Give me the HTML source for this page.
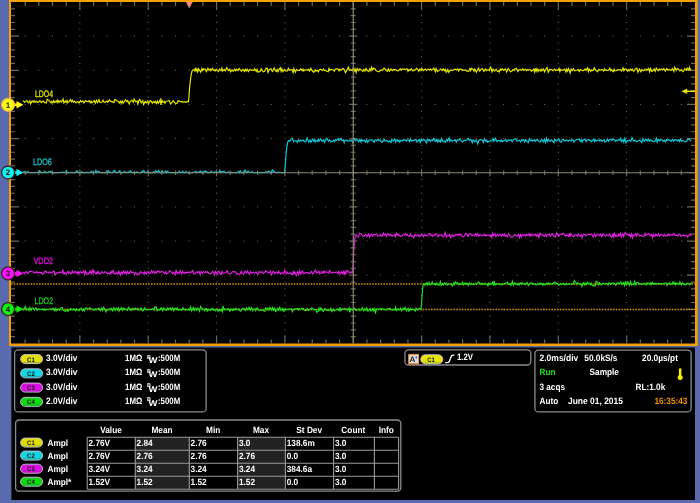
<!DOCTYPE html><html><head><meta charset="utf-8"><style>html,body{margin:0;padding:0;width:700px;height:503px;overflow:hidden;background:#5a6aae;font-family:"Liberation Sans",sans-serif}</style></head><body><svg width="700" height="503" viewBox="0 0 700 503" style="position:absolute;left:0;top:0;will-change:transform" text-rendering="geometricPrecision"><rect x="0" y="0" width="700" height="503" fill="#5a6aae"/><rect x="9" y="0" width="688.7" height="346" fill="#f5a000"/><rect x="11.0" y="2.0" width="684.0" height="341.5" fill="#000"/><rect x="11.4" y="347.5" width="683.6" height="152.5" fill="#000"/><path d="M24.67 35.65h1v1h-1zM38.34 35.65h1v1h-1zM52.01 35.65h1v1h-1zM65.68 35.65h1v1h-1zM79.35 35.65h1v1h-1zM93.02 35.65h1v1h-1zM106.69 35.65h1v1h-1zM120.36 35.65h1v1h-1zM134.03 35.65h1v1h-1zM147.70 35.65h1v1h-1zM161.37 35.65h1v1h-1zM175.04 35.65h1v1h-1zM188.71 35.65h1v1h-1zM202.38 35.65h1v1h-1zM216.05 35.65h1v1h-1zM229.72 35.65h1v1h-1zM243.39 35.65h1v1h-1zM257.06 35.65h1v1h-1zM270.73 35.65h1v1h-1zM284.40 35.65h1v1h-1zM298.07 35.65h1v1h-1zM311.74 35.65h1v1h-1zM325.41 35.65h1v1h-1zM339.08 35.65h1v1h-1zM352.75 35.65h1v1h-1zM366.42 35.65h1v1h-1zM380.09 35.65h1v1h-1zM393.76 35.65h1v1h-1zM407.43 35.65h1v1h-1zM421.10 35.65h1v1h-1zM434.77 35.65h1v1h-1zM448.44 35.65h1v1h-1zM462.11 35.65h1v1h-1zM475.78 35.65h1v1h-1zM489.45 35.65h1v1h-1zM503.12 35.65h1v1h-1zM516.79 35.65h1v1h-1zM530.46 35.65h1v1h-1zM544.13 35.65h1v1h-1zM557.80 35.65h1v1h-1zM571.47 35.65h1v1h-1zM585.14 35.65h1v1h-1zM598.81 35.65h1v1h-1zM612.48 35.65h1v1h-1zM626.15 35.65h1v1h-1zM639.82 35.65h1v1h-1zM653.49 35.65h1v1h-1zM667.16 35.65h1v1h-1zM680.83 35.65h1v1h-1zM24.67 69.80h1v1h-1zM38.34 69.80h1v1h-1zM52.01 69.80h1v1h-1zM65.68 69.80h1v1h-1zM79.35 69.80h1v1h-1zM93.02 69.80h1v1h-1zM106.69 69.80h1v1h-1zM120.36 69.80h1v1h-1zM134.03 69.80h1v1h-1zM147.70 69.80h1v1h-1zM161.37 69.80h1v1h-1zM175.04 69.80h1v1h-1zM188.71 69.80h1v1h-1zM202.38 69.80h1v1h-1zM216.05 69.80h1v1h-1zM229.72 69.80h1v1h-1zM243.39 69.80h1v1h-1zM257.06 69.80h1v1h-1zM270.73 69.80h1v1h-1zM284.40 69.80h1v1h-1zM298.07 69.80h1v1h-1zM311.74 69.80h1v1h-1zM325.41 69.80h1v1h-1zM339.08 69.80h1v1h-1zM352.75 69.80h1v1h-1zM366.42 69.80h1v1h-1zM380.09 69.80h1v1h-1zM393.76 69.80h1v1h-1zM407.43 69.80h1v1h-1zM421.10 69.80h1v1h-1zM434.77 69.80h1v1h-1zM448.44 69.80h1v1h-1zM462.11 69.80h1v1h-1zM475.78 69.80h1v1h-1zM489.45 69.80h1v1h-1zM503.12 69.80h1v1h-1zM516.79 69.80h1v1h-1zM530.46 69.80h1v1h-1zM544.13 69.80h1v1h-1zM557.80 69.80h1v1h-1zM571.47 69.80h1v1h-1zM585.14 69.80h1v1h-1zM598.81 69.80h1v1h-1zM612.48 69.80h1v1h-1zM626.15 69.80h1v1h-1zM639.82 69.80h1v1h-1zM653.49 69.80h1v1h-1zM667.16 69.80h1v1h-1zM680.83 69.80h1v1h-1zM24.67 103.95h1v1h-1zM38.34 103.95h1v1h-1zM52.01 103.95h1v1h-1zM65.68 103.95h1v1h-1zM79.35 103.95h1v1h-1zM93.02 103.95h1v1h-1zM106.69 103.95h1v1h-1zM120.36 103.95h1v1h-1zM134.03 103.95h1v1h-1zM147.70 103.95h1v1h-1zM161.37 103.95h1v1h-1zM175.04 103.95h1v1h-1zM188.71 103.95h1v1h-1zM202.38 103.95h1v1h-1zM216.05 103.95h1v1h-1zM229.72 103.95h1v1h-1zM243.39 103.95h1v1h-1zM257.06 103.95h1v1h-1zM270.73 103.95h1v1h-1zM284.40 103.95h1v1h-1zM298.07 103.95h1v1h-1zM311.74 103.95h1v1h-1zM325.41 103.95h1v1h-1zM339.08 103.95h1v1h-1zM352.75 103.95h1v1h-1zM366.42 103.95h1v1h-1zM380.09 103.95h1v1h-1zM393.76 103.95h1v1h-1zM407.43 103.95h1v1h-1zM421.10 103.95h1v1h-1zM434.77 103.95h1v1h-1zM448.44 103.95h1v1h-1zM462.11 103.95h1v1h-1zM475.78 103.95h1v1h-1zM489.45 103.95h1v1h-1zM503.12 103.95h1v1h-1zM516.79 103.95h1v1h-1zM530.46 103.95h1v1h-1zM544.13 103.95h1v1h-1zM557.80 103.95h1v1h-1zM571.47 103.95h1v1h-1zM585.14 103.95h1v1h-1zM598.81 103.95h1v1h-1zM612.48 103.95h1v1h-1zM626.15 103.95h1v1h-1zM639.82 103.95h1v1h-1zM653.49 103.95h1v1h-1zM667.16 103.95h1v1h-1zM680.83 103.95h1v1h-1zM24.67 138.10h1v1h-1zM38.34 138.10h1v1h-1zM52.01 138.10h1v1h-1zM65.68 138.10h1v1h-1zM79.35 138.10h1v1h-1zM93.02 138.10h1v1h-1zM106.69 138.10h1v1h-1zM120.36 138.10h1v1h-1zM134.03 138.10h1v1h-1zM147.70 138.10h1v1h-1zM161.37 138.10h1v1h-1zM175.04 138.10h1v1h-1zM188.71 138.10h1v1h-1zM202.38 138.10h1v1h-1zM216.05 138.10h1v1h-1zM229.72 138.10h1v1h-1zM243.39 138.10h1v1h-1zM257.06 138.10h1v1h-1zM270.73 138.10h1v1h-1zM284.40 138.10h1v1h-1zM298.07 138.10h1v1h-1zM311.74 138.10h1v1h-1zM325.41 138.10h1v1h-1zM339.08 138.10h1v1h-1zM352.75 138.10h1v1h-1zM366.42 138.10h1v1h-1zM380.09 138.10h1v1h-1zM393.76 138.10h1v1h-1zM407.43 138.10h1v1h-1zM421.10 138.10h1v1h-1zM434.77 138.10h1v1h-1zM448.44 138.10h1v1h-1zM462.11 138.10h1v1h-1zM475.78 138.10h1v1h-1zM489.45 138.10h1v1h-1zM503.12 138.10h1v1h-1zM516.79 138.10h1v1h-1zM530.46 138.10h1v1h-1zM544.13 138.10h1v1h-1zM557.80 138.10h1v1h-1zM571.47 138.10h1v1h-1zM585.14 138.10h1v1h-1zM598.81 138.10h1v1h-1zM612.48 138.10h1v1h-1zM626.15 138.10h1v1h-1zM639.82 138.10h1v1h-1zM653.49 138.10h1v1h-1zM667.16 138.10h1v1h-1zM680.83 138.10h1v1h-1zM24.67 206.40h1v1h-1zM38.34 206.40h1v1h-1zM52.01 206.40h1v1h-1zM65.68 206.40h1v1h-1zM79.35 206.40h1v1h-1zM93.02 206.40h1v1h-1zM106.69 206.40h1v1h-1zM120.36 206.40h1v1h-1zM134.03 206.40h1v1h-1zM147.70 206.40h1v1h-1zM161.37 206.40h1v1h-1zM175.04 206.40h1v1h-1zM188.71 206.40h1v1h-1zM202.38 206.40h1v1h-1zM216.05 206.40h1v1h-1zM229.72 206.40h1v1h-1zM243.39 206.40h1v1h-1zM257.06 206.40h1v1h-1zM270.73 206.40h1v1h-1zM284.40 206.40h1v1h-1zM298.07 206.40h1v1h-1zM311.74 206.40h1v1h-1zM325.41 206.40h1v1h-1zM339.08 206.40h1v1h-1zM352.75 206.40h1v1h-1zM366.42 206.40h1v1h-1zM380.09 206.40h1v1h-1zM393.76 206.40h1v1h-1zM407.43 206.40h1v1h-1zM421.10 206.40h1v1h-1zM434.77 206.40h1v1h-1zM448.44 206.40h1v1h-1zM462.11 206.40h1v1h-1zM475.78 206.40h1v1h-1zM489.45 206.40h1v1h-1zM503.12 206.40h1v1h-1zM516.79 206.40h1v1h-1zM530.46 206.40h1v1h-1zM544.13 206.40h1v1h-1zM557.80 206.40h1v1h-1zM571.47 206.40h1v1h-1zM585.14 206.40h1v1h-1zM598.81 206.40h1v1h-1zM612.48 206.40h1v1h-1zM626.15 206.40h1v1h-1zM639.82 206.40h1v1h-1zM653.49 206.40h1v1h-1zM667.16 206.40h1v1h-1zM680.83 206.40h1v1h-1zM24.67 240.55h1v1h-1zM38.34 240.55h1v1h-1zM52.01 240.55h1v1h-1zM65.68 240.55h1v1h-1zM79.35 240.55h1v1h-1zM93.02 240.55h1v1h-1zM106.69 240.55h1v1h-1zM120.36 240.55h1v1h-1zM134.03 240.55h1v1h-1zM147.70 240.55h1v1h-1zM161.37 240.55h1v1h-1zM175.04 240.55h1v1h-1zM188.71 240.55h1v1h-1zM202.38 240.55h1v1h-1zM216.05 240.55h1v1h-1zM229.72 240.55h1v1h-1zM243.39 240.55h1v1h-1zM257.06 240.55h1v1h-1zM270.73 240.55h1v1h-1zM284.40 240.55h1v1h-1zM298.07 240.55h1v1h-1zM311.74 240.55h1v1h-1zM325.41 240.55h1v1h-1zM339.08 240.55h1v1h-1zM352.75 240.55h1v1h-1zM366.42 240.55h1v1h-1zM380.09 240.55h1v1h-1zM393.76 240.55h1v1h-1zM407.43 240.55h1v1h-1zM421.10 240.55h1v1h-1zM434.77 240.55h1v1h-1zM448.44 240.55h1v1h-1zM462.11 240.55h1v1h-1zM475.78 240.55h1v1h-1zM489.45 240.55h1v1h-1zM503.12 240.55h1v1h-1zM516.79 240.55h1v1h-1zM530.46 240.55h1v1h-1zM544.13 240.55h1v1h-1zM557.80 240.55h1v1h-1zM571.47 240.55h1v1h-1zM585.14 240.55h1v1h-1zM598.81 240.55h1v1h-1zM612.48 240.55h1v1h-1zM626.15 240.55h1v1h-1zM639.82 240.55h1v1h-1zM653.49 240.55h1v1h-1zM667.16 240.55h1v1h-1zM680.83 240.55h1v1h-1zM24.67 274.70h1v1h-1zM38.34 274.70h1v1h-1zM52.01 274.70h1v1h-1zM65.68 274.70h1v1h-1zM79.35 274.70h1v1h-1zM93.02 274.70h1v1h-1zM106.69 274.70h1v1h-1zM120.36 274.70h1v1h-1zM134.03 274.70h1v1h-1zM147.70 274.70h1v1h-1zM161.37 274.70h1v1h-1zM175.04 274.70h1v1h-1zM188.71 274.70h1v1h-1zM202.38 274.70h1v1h-1zM216.05 274.70h1v1h-1zM229.72 274.70h1v1h-1zM243.39 274.70h1v1h-1zM257.06 274.70h1v1h-1zM270.73 274.70h1v1h-1zM284.40 274.70h1v1h-1zM298.07 274.70h1v1h-1zM311.74 274.70h1v1h-1zM325.41 274.70h1v1h-1zM339.08 274.70h1v1h-1zM352.75 274.70h1v1h-1zM366.42 274.70h1v1h-1zM380.09 274.70h1v1h-1zM393.76 274.70h1v1h-1zM407.43 274.70h1v1h-1zM421.10 274.70h1v1h-1zM434.77 274.70h1v1h-1zM448.44 274.70h1v1h-1zM462.11 274.70h1v1h-1zM475.78 274.70h1v1h-1zM489.45 274.70h1v1h-1zM503.12 274.70h1v1h-1zM516.79 274.70h1v1h-1zM530.46 274.70h1v1h-1zM544.13 274.70h1v1h-1zM557.80 274.70h1v1h-1zM571.47 274.70h1v1h-1zM585.14 274.70h1v1h-1zM598.81 274.70h1v1h-1zM612.48 274.70h1v1h-1zM626.15 274.70h1v1h-1zM639.82 274.70h1v1h-1zM653.49 274.70h1v1h-1zM667.16 274.70h1v1h-1zM680.83 274.70h1v1h-1zM24.67 308.85h1v1h-1zM38.34 308.85h1v1h-1zM52.01 308.85h1v1h-1zM65.68 308.85h1v1h-1zM79.35 308.85h1v1h-1zM93.02 308.85h1v1h-1zM106.69 308.85h1v1h-1zM120.36 308.85h1v1h-1zM134.03 308.85h1v1h-1zM147.70 308.85h1v1h-1zM161.37 308.85h1v1h-1zM175.04 308.85h1v1h-1zM188.71 308.85h1v1h-1zM202.38 308.85h1v1h-1zM216.05 308.85h1v1h-1zM229.72 308.85h1v1h-1zM243.39 308.85h1v1h-1zM257.06 308.85h1v1h-1zM270.73 308.85h1v1h-1zM284.40 308.85h1v1h-1zM298.07 308.85h1v1h-1zM311.74 308.85h1v1h-1zM325.41 308.85h1v1h-1zM339.08 308.85h1v1h-1zM352.75 308.85h1v1h-1zM366.42 308.85h1v1h-1zM380.09 308.85h1v1h-1zM393.76 308.85h1v1h-1zM407.43 308.85h1v1h-1zM421.10 308.85h1v1h-1zM434.77 308.85h1v1h-1zM448.44 308.85h1v1h-1zM462.11 308.85h1v1h-1zM475.78 308.85h1v1h-1zM489.45 308.85h1v1h-1zM503.12 308.85h1v1h-1zM516.79 308.85h1v1h-1zM530.46 308.85h1v1h-1zM544.13 308.85h1v1h-1zM557.80 308.85h1v1h-1zM571.47 308.85h1v1h-1zM585.14 308.85h1v1h-1zM598.81 308.85h1v1h-1zM612.48 308.85h1v1h-1zM626.15 308.85h1v1h-1zM639.82 308.85h1v1h-1zM653.49 308.85h1v1h-1zM667.16 308.85h1v1h-1zM680.83 308.85h1v1h-1zM79.35 8.33h1v1h-1zM79.35 15.16h1v1h-1zM79.35 21.99h1v1h-1zM79.35 28.82h1v1h-1zM79.35 35.65h1v1h-1zM79.35 42.48h1v1h-1zM79.35 49.31h1v1h-1zM79.35 56.14h1v1h-1zM79.35 62.97h1v1h-1zM79.35 69.80h1v1h-1zM79.35 76.63h1v1h-1zM79.35 83.46h1v1h-1zM79.35 90.29h1v1h-1zM79.35 97.12h1v1h-1zM79.35 103.95h1v1h-1zM79.35 110.78h1v1h-1zM79.35 117.61h1v1h-1zM79.35 124.44h1v1h-1zM79.35 131.27h1v1h-1zM79.35 138.10h1v1h-1zM79.35 144.93h1v1h-1zM79.35 151.76h1v1h-1zM79.35 158.59h1v1h-1zM79.35 165.42h1v1h-1zM79.35 172.25h1v1h-1zM79.35 179.08h1v1h-1zM79.35 185.91h1v1h-1zM79.35 192.74h1v1h-1zM79.35 199.57h1v1h-1zM79.35 206.40h1v1h-1zM79.35 213.23h1v1h-1zM79.35 220.06h1v1h-1zM79.35 226.89h1v1h-1zM79.35 233.72h1v1h-1zM79.35 240.55h1v1h-1zM79.35 247.38h1v1h-1zM79.35 254.21h1v1h-1zM79.35 261.04h1v1h-1zM79.35 267.87h1v1h-1zM79.35 274.70h1v1h-1zM79.35 281.53h1v1h-1zM79.35 288.36h1v1h-1zM79.35 295.19h1v1h-1zM79.35 302.02h1v1h-1zM79.35 308.85h1v1h-1zM79.35 315.68h1v1h-1zM79.35 322.51h1v1h-1zM79.35 329.34h1v1h-1zM79.35 336.17h1v1h-1zM147.70 8.33h1v1h-1zM147.70 15.16h1v1h-1zM147.70 21.99h1v1h-1zM147.70 28.82h1v1h-1zM147.70 35.65h1v1h-1zM147.70 42.48h1v1h-1zM147.70 49.31h1v1h-1zM147.70 56.14h1v1h-1zM147.70 62.97h1v1h-1zM147.70 69.80h1v1h-1zM147.70 76.63h1v1h-1zM147.70 83.46h1v1h-1zM147.70 90.29h1v1h-1zM147.70 97.12h1v1h-1zM147.70 103.95h1v1h-1zM147.70 110.78h1v1h-1zM147.70 117.61h1v1h-1zM147.70 124.44h1v1h-1zM147.70 131.27h1v1h-1zM147.70 138.10h1v1h-1zM147.70 144.93h1v1h-1zM147.70 151.76h1v1h-1zM147.70 158.59h1v1h-1zM147.70 165.42h1v1h-1zM147.70 172.25h1v1h-1zM147.70 179.08h1v1h-1zM147.70 185.91h1v1h-1zM147.70 192.74h1v1h-1zM147.70 199.57h1v1h-1zM147.70 206.40h1v1h-1zM147.70 213.23h1v1h-1zM147.70 220.06h1v1h-1zM147.70 226.89h1v1h-1zM147.70 233.72h1v1h-1zM147.70 240.55h1v1h-1zM147.70 247.38h1v1h-1zM147.70 254.21h1v1h-1zM147.70 261.04h1v1h-1zM147.70 267.87h1v1h-1zM147.70 274.70h1v1h-1zM147.70 281.53h1v1h-1zM147.70 288.36h1v1h-1zM147.70 295.19h1v1h-1zM147.70 302.02h1v1h-1zM147.70 308.85h1v1h-1zM147.70 315.68h1v1h-1zM147.70 322.51h1v1h-1zM147.70 329.34h1v1h-1zM147.70 336.17h1v1h-1zM216.05 8.33h1v1h-1zM216.05 15.16h1v1h-1zM216.05 21.99h1v1h-1zM216.05 28.82h1v1h-1zM216.05 35.65h1v1h-1zM216.05 42.48h1v1h-1zM216.05 49.31h1v1h-1zM216.05 56.14h1v1h-1zM216.05 62.97h1v1h-1zM216.05 69.80h1v1h-1zM216.05 76.63h1v1h-1zM216.05 83.46h1v1h-1zM216.05 90.29h1v1h-1zM216.05 97.12h1v1h-1zM216.05 103.95h1v1h-1zM216.05 110.78h1v1h-1zM216.05 117.61h1v1h-1zM216.05 124.44h1v1h-1zM216.05 131.27h1v1h-1zM216.05 138.10h1v1h-1zM216.05 144.93h1v1h-1zM216.05 151.76h1v1h-1zM216.05 158.59h1v1h-1zM216.05 165.42h1v1h-1zM216.05 172.25h1v1h-1zM216.05 179.08h1v1h-1zM216.05 185.91h1v1h-1zM216.05 192.74h1v1h-1zM216.05 199.57h1v1h-1zM216.05 206.40h1v1h-1zM216.05 213.23h1v1h-1zM216.05 220.06h1v1h-1zM216.05 226.89h1v1h-1zM216.05 233.72h1v1h-1zM216.05 240.55h1v1h-1zM216.05 247.38h1v1h-1zM216.05 254.21h1v1h-1zM216.05 261.04h1v1h-1zM216.05 267.87h1v1h-1zM216.05 274.70h1v1h-1zM216.05 281.53h1v1h-1zM216.05 288.36h1v1h-1zM216.05 295.19h1v1h-1zM216.05 302.02h1v1h-1zM216.05 308.85h1v1h-1zM216.05 315.68h1v1h-1zM216.05 322.51h1v1h-1zM216.05 329.34h1v1h-1zM216.05 336.17h1v1h-1zM284.40 8.33h1v1h-1zM284.40 15.16h1v1h-1zM284.40 21.99h1v1h-1zM284.40 28.82h1v1h-1zM284.40 35.65h1v1h-1zM284.40 42.48h1v1h-1zM284.40 49.31h1v1h-1zM284.40 56.14h1v1h-1zM284.40 62.97h1v1h-1zM284.40 69.80h1v1h-1zM284.40 76.63h1v1h-1zM284.40 83.46h1v1h-1zM284.40 90.29h1v1h-1zM284.40 97.12h1v1h-1zM284.40 103.95h1v1h-1zM284.40 110.78h1v1h-1zM284.40 117.61h1v1h-1zM284.40 124.44h1v1h-1zM284.40 131.27h1v1h-1zM284.40 138.10h1v1h-1zM284.40 144.93h1v1h-1zM284.40 151.76h1v1h-1zM284.40 158.59h1v1h-1zM284.40 165.42h1v1h-1zM284.40 172.25h1v1h-1zM284.40 179.08h1v1h-1zM284.40 185.91h1v1h-1zM284.40 192.74h1v1h-1zM284.40 199.57h1v1h-1zM284.40 206.40h1v1h-1zM284.40 213.23h1v1h-1zM284.40 220.06h1v1h-1zM284.40 226.89h1v1h-1zM284.40 233.72h1v1h-1zM284.40 240.55h1v1h-1zM284.40 247.38h1v1h-1zM284.40 254.21h1v1h-1zM284.40 261.04h1v1h-1zM284.40 267.87h1v1h-1zM284.40 274.70h1v1h-1zM284.40 281.53h1v1h-1zM284.40 288.36h1v1h-1zM284.40 295.19h1v1h-1zM284.40 302.02h1v1h-1zM284.40 308.85h1v1h-1zM284.40 315.68h1v1h-1zM284.40 322.51h1v1h-1zM284.40 329.34h1v1h-1zM284.40 336.17h1v1h-1zM421.10 8.33h1v1h-1zM421.10 15.16h1v1h-1zM421.10 21.99h1v1h-1zM421.10 28.82h1v1h-1zM421.10 35.65h1v1h-1zM421.10 42.48h1v1h-1zM421.10 49.31h1v1h-1zM421.10 56.14h1v1h-1zM421.10 62.97h1v1h-1zM421.10 69.80h1v1h-1zM421.10 76.63h1v1h-1zM421.10 83.46h1v1h-1zM421.10 90.29h1v1h-1zM421.10 97.12h1v1h-1zM421.10 103.95h1v1h-1zM421.10 110.78h1v1h-1zM421.10 117.61h1v1h-1zM421.10 124.44h1v1h-1zM421.10 131.27h1v1h-1zM421.10 138.10h1v1h-1zM421.10 144.93h1v1h-1zM421.10 151.76h1v1h-1zM421.10 158.59h1v1h-1zM421.10 165.42h1v1h-1zM421.10 172.25h1v1h-1zM421.10 179.08h1v1h-1zM421.10 185.91h1v1h-1zM421.10 192.74h1v1h-1zM421.10 199.57h1v1h-1zM421.10 206.40h1v1h-1zM421.10 213.23h1v1h-1zM421.10 220.06h1v1h-1zM421.10 226.89h1v1h-1zM421.10 233.72h1v1h-1zM421.10 240.55h1v1h-1zM421.10 247.38h1v1h-1zM421.10 254.21h1v1h-1zM421.10 261.04h1v1h-1zM421.10 267.87h1v1h-1zM421.10 274.70h1v1h-1zM421.10 281.53h1v1h-1zM421.10 288.36h1v1h-1zM421.10 295.19h1v1h-1zM421.10 302.02h1v1h-1zM421.10 308.85h1v1h-1zM421.10 315.68h1v1h-1zM421.10 322.51h1v1h-1zM421.10 329.34h1v1h-1zM421.10 336.17h1v1h-1zM489.45 8.33h1v1h-1zM489.45 15.16h1v1h-1zM489.45 21.99h1v1h-1zM489.45 28.82h1v1h-1zM489.45 35.65h1v1h-1zM489.45 42.48h1v1h-1zM489.45 49.31h1v1h-1zM489.45 56.14h1v1h-1zM489.45 62.97h1v1h-1zM489.45 69.80h1v1h-1zM489.45 76.63h1v1h-1zM489.45 83.46h1v1h-1zM489.45 90.29h1v1h-1zM489.45 97.12h1v1h-1zM489.45 103.95h1v1h-1zM489.45 110.78h1v1h-1zM489.45 117.61h1v1h-1zM489.45 124.44h1v1h-1zM489.45 131.27h1v1h-1zM489.45 138.10h1v1h-1zM489.45 144.93h1v1h-1zM489.45 151.76h1v1h-1zM489.45 158.59h1v1h-1zM489.45 165.42h1v1h-1zM489.45 172.25h1v1h-1zM489.45 179.08h1v1h-1zM489.45 185.91h1v1h-1zM489.45 192.74h1v1h-1zM489.45 199.57h1v1h-1zM489.45 206.40h1v1h-1zM489.45 213.23h1v1h-1zM489.45 220.06h1v1h-1zM489.45 226.89h1v1h-1zM489.45 233.72h1v1h-1zM489.45 240.55h1v1h-1zM489.45 247.38h1v1h-1zM489.45 254.21h1v1h-1zM489.45 261.04h1v1h-1zM489.45 267.87h1v1h-1zM489.45 274.70h1v1h-1zM489.45 281.53h1v1h-1zM489.45 288.36h1v1h-1zM489.45 295.19h1v1h-1zM489.45 302.02h1v1h-1zM489.45 308.85h1v1h-1zM489.45 315.68h1v1h-1zM489.45 322.51h1v1h-1zM489.45 329.34h1v1h-1zM489.45 336.17h1v1h-1zM557.80 8.33h1v1h-1zM557.80 15.16h1v1h-1zM557.80 21.99h1v1h-1zM557.80 28.82h1v1h-1zM557.80 35.65h1v1h-1zM557.80 42.48h1v1h-1zM557.80 49.31h1v1h-1zM557.80 56.14h1v1h-1zM557.80 62.97h1v1h-1zM557.80 69.80h1v1h-1zM557.80 76.63h1v1h-1zM557.80 83.46h1v1h-1zM557.80 90.29h1v1h-1zM557.80 97.12h1v1h-1zM557.80 103.95h1v1h-1zM557.80 110.78h1v1h-1zM557.80 117.61h1v1h-1zM557.80 124.44h1v1h-1zM557.80 131.27h1v1h-1zM557.80 138.10h1v1h-1zM557.80 144.93h1v1h-1zM557.80 151.76h1v1h-1zM557.80 158.59h1v1h-1zM557.80 165.42h1v1h-1zM557.80 172.25h1v1h-1zM557.80 179.08h1v1h-1zM557.80 185.91h1v1h-1zM557.80 192.74h1v1h-1zM557.80 199.57h1v1h-1zM557.80 206.40h1v1h-1zM557.80 213.23h1v1h-1zM557.80 220.06h1v1h-1zM557.80 226.89h1v1h-1zM557.80 233.72h1v1h-1zM557.80 240.55h1v1h-1zM557.80 247.38h1v1h-1zM557.80 254.21h1v1h-1zM557.80 261.04h1v1h-1zM557.80 267.87h1v1h-1zM557.80 274.70h1v1h-1zM557.80 281.53h1v1h-1zM557.80 288.36h1v1h-1zM557.80 295.19h1v1h-1zM557.80 302.02h1v1h-1zM557.80 308.85h1v1h-1zM557.80 315.68h1v1h-1zM557.80 322.51h1v1h-1zM557.80 329.34h1v1h-1zM557.80 336.17h1v1h-1zM626.15 8.33h1v1h-1zM626.15 15.16h1v1h-1zM626.15 21.99h1v1h-1zM626.15 28.82h1v1h-1zM626.15 35.65h1v1h-1zM626.15 42.48h1v1h-1zM626.15 49.31h1v1h-1zM626.15 56.14h1v1h-1zM626.15 62.97h1v1h-1zM626.15 69.80h1v1h-1zM626.15 76.63h1v1h-1zM626.15 83.46h1v1h-1zM626.15 90.29h1v1h-1zM626.15 97.12h1v1h-1zM626.15 103.95h1v1h-1zM626.15 110.78h1v1h-1zM626.15 117.61h1v1h-1zM626.15 124.44h1v1h-1zM626.15 131.27h1v1h-1zM626.15 138.10h1v1h-1zM626.15 144.93h1v1h-1zM626.15 151.76h1v1h-1zM626.15 158.59h1v1h-1zM626.15 165.42h1v1h-1zM626.15 172.25h1v1h-1zM626.15 179.08h1v1h-1zM626.15 185.91h1v1h-1zM626.15 192.74h1v1h-1zM626.15 199.57h1v1h-1zM626.15 206.40h1v1h-1zM626.15 213.23h1v1h-1zM626.15 220.06h1v1h-1zM626.15 226.89h1v1h-1zM626.15 233.72h1v1h-1zM626.15 240.55h1v1h-1zM626.15 247.38h1v1h-1zM626.15 254.21h1v1h-1zM626.15 261.04h1v1h-1zM626.15 267.87h1v1h-1zM626.15 274.70h1v1h-1zM626.15 281.53h1v1h-1zM626.15 288.36h1v1h-1zM626.15 295.19h1v1h-1zM626.15 302.02h1v1h-1zM626.15 308.85h1v1h-1zM626.15 315.68h1v1h-1zM626.15 322.51h1v1h-1zM626.15 329.34h1v1h-1zM626.15 336.17h1v1h-1z" fill="#726d58"/><path d="M25.17 2.0v4M25.17 343.5v-4M25.17 170.55v4.4M38.84 2.0v4M38.84 343.5v-4M38.84 170.55v4.4M52.51 2.0v4M52.51 343.5v-4M52.51 170.55v4.4M66.18 2.0v4M66.18 343.5v-4M66.18 170.55v4.4M79.85 2.0v8M79.85 343.5v-8M79.85 169.25v7.0M93.52 2.0v4M93.52 343.5v-4M93.52 170.55v4.4M107.19 2.0v4M107.19 343.5v-4M107.19 170.55v4.4M120.86 2.0v4M120.86 343.5v-4M120.86 170.55v4.4M134.53 2.0v4M134.53 343.5v-4M134.53 170.55v4.4M148.20 2.0v8M148.20 343.5v-8M148.20 169.25v7.0M161.87 2.0v4M161.87 343.5v-4M161.87 170.55v4.4M175.54 2.0v4M175.54 343.5v-4M175.54 170.55v4.4M189.21 2.0v4M189.21 343.5v-4M189.21 170.55v4.4M202.88 2.0v4M202.88 343.5v-4M202.88 170.55v4.4M216.55 2.0v8M216.55 343.5v-8M216.55 169.25v7.0M230.22 2.0v4M230.22 343.5v-4M230.22 170.55v4.4M243.89 2.0v4M243.89 343.5v-4M243.89 170.55v4.4M257.56 2.0v4M257.56 343.5v-4M257.56 170.55v4.4M271.23 2.0v4M271.23 343.5v-4M271.23 170.55v4.4M284.90 2.0v8M284.90 343.5v-8M284.90 169.25v7.0M298.57 2.0v4M298.57 343.5v-4M298.57 170.55v4.4M312.24 2.0v4M312.24 343.5v-4M312.24 170.55v4.4M325.91 2.0v4M325.91 343.5v-4M325.91 170.55v4.4M339.58 2.0v4M339.58 343.5v-4M339.58 170.55v4.4M353.25 2.0v8M353.25 343.5v-8M353.25 169.25v7.0M366.92 2.0v4M366.92 343.5v-4M366.92 170.55v4.4M380.59 2.0v4M380.59 343.5v-4M380.59 170.55v4.4M394.26 2.0v4M394.26 343.5v-4M394.26 170.55v4.4M407.93 2.0v4M407.93 343.5v-4M407.93 170.55v4.4M421.60 2.0v8M421.60 343.5v-8M421.60 169.25v7.0M435.27 2.0v4M435.27 343.5v-4M435.27 170.55v4.4M448.94 2.0v4M448.94 343.5v-4M448.94 170.55v4.4M462.61 2.0v4M462.61 343.5v-4M462.61 170.55v4.4M476.28 2.0v4M476.28 343.5v-4M476.28 170.55v4.4M489.95 2.0v8M489.95 343.5v-8M489.95 169.25v7.0M503.62 2.0v4M503.62 343.5v-4M503.62 170.55v4.4M517.29 2.0v4M517.29 343.5v-4M517.29 170.55v4.4M530.96 2.0v4M530.96 343.5v-4M530.96 170.55v4.4M544.63 2.0v4M544.63 343.5v-4M544.63 170.55v4.4M558.30 2.0v8M558.30 343.5v-8M558.30 169.25v7.0M571.97 2.0v4M571.97 343.5v-4M571.97 170.55v4.4M585.64 2.0v4M585.64 343.5v-4M585.64 170.55v4.4M599.31 2.0v4M599.31 343.5v-4M599.31 170.55v4.4M612.98 2.0v4M612.98 343.5v-4M612.98 170.55v4.4M626.65 2.0v8M626.65 343.5v-8M626.65 169.25v7.0M640.32 2.0v4M640.32 343.5v-4M640.32 170.55v4.4M653.99 2.0v4M653.99 343.5v-4M653.99 170.55v4.4M667.66 2.0v4M667.66 343.5v-4M667.66 170.55v4.4M681.33 2.0v4M681.33 343.5v-4M681.33 170.55v4.4M11.0 8.83h4M695.0 8.83h-4M350.75 8.83h5.0M11.0 15.66h4M695.0 15.66h-4M350.75 15.66h5.0M11.0 22.49h4M695.0 22.49h-4M350.75 22.49h5.0M11.0 29.32h4M695.0 29.32h-4M350.75 29.32h5.0M11.0 36.15h8M695.0 36.15h-8M349.25 36.15h8M11.0 42.98h4M695.0 42.98h-4M350.75 42.98h5.0M11.0 49.81h4M695.0 49.81h-4M350.75 49.81h5.0M11.0 56.64h4M695.0 56.64h-4M350.75 56.64h5.0M11.0 63.47h4M695.0 63.47h-4M350.75 63.47h5.0M11.0 70.30h8M695.0 70.30h-8M349.25 70.30h8M11.0 77.13h4M695.0 77.13h-4M350.75 77.13h5.0M11.0 83.96h4M695.0 83.96h-4M350.75 83.96h5.0M11.0 90.79h4M695.0 90.79h-4M350.75 90.79h5.0M11.0 97.62h4M695.0 97.62h-4M350.75 97.62h5.0M11.0 104.45h8M695.0 104.45h-8M349.25 104.45h8M11.0 111.28h4M695.0 111.28h-4M350.75 111.28h5.0M11.0 118.11h4M695.0 118.11h-4M350.75 118.11h5.0M11.0 124.94h4M695.0 124.94h-4M350.75 124.94h5.0M11.0 131.77h4M695.0 131.77h-4M350.75 131.77h5.0M11.0 138.60h8M695.0 138.60h-8M349.25 138.60h8M11.0 145.43h4M695.0 145.43h-4M350.75 145.43h5.0M11.0 152.26h4M695.0 152.26h-4M350.75 152.26h5.0M11.0 159.09h4M695.0 159.09h-4M350.75 159.09h5.0M11.0 165.92h4M695.0 165.92h-4M350.75 165.92h5.0M11.0 172.75h8M695.0 172.75h-8M349.25 172.75h8M11.0 179.58h4M695.0 179.58h-4M350.75 179.58h5.0M11.0 186.41h4M695.0 186.41h-4M350.75 186.41h5.0M11.0 193.24h4M695.0 193.24h-4M350.75 193.24h5.0M11.0 200.07h4M695.0 200.07h-4M350.75 200.07h5.0M11.0 206.90h8M695.0 206.90h-8M349.25 206.90h8M11.0 213.73h4M695.0 213.73h-4M350.75 213.73h5.0M11.0 220.56h4M695.0 220.56h-4M350.75 220.56h5.0M11.0 227.39h4M695.0 227.39h-4M350.75 227.39h5.0M11.0 234.22h4M695.0 234.22h-4M350.75 234.22h5.0M11.0 241.05h8M695.0 241.05h-8M349.25 241.05h8M11.0 247.88h4M695.0 247.88h-4M350.75 247.88h5.0M11.0 254.71h4M695.0 254.71h-4M350.75 254.71h5.0M11.0 261.54h4M695.0 261.54h-4M350.75 261.54h5.0M11.0 268.37h4M695.0 268.37h-4M350.75 268.37h5.0M11.0 275.20h8M695.0 275.20h-8M349.25 275.20h8M11.0 282.03h4M695.0 282.03h-4M350.75 282.03h5.0M11.0 288.86h4M695.0 288.86h-4M350.75 288.86h5.0M11.0 295.69h4M695.0 295.69h-4M350.75 295.69h5.0M11.0 302.52h4M695.0 302.52h-4M350.75 302.52h5.0M11.0 309.35h8M695.0 309.35h-8M349.25 309.35h8M11.0 316.18h4M695.0 316.18h-4M350.75 316.18h5.0M11.0 323.01h4M695.0 323.01h-4M350.75 323.01h5.0M11.0 329.84h4M695.0 329.84h-4M350.75 329.84h5.0M11.0 336.67h4M695.0 336.67h-4M350.75 336.67h5.0" stroke="#6e6955" stroke-width="1.2" fill="none"/><path d="M11.0 284.1H695.0M11.0 309.6H695.0" stroke="#d08c14" stroke-width="1.5" stroke-dasharray="1.6 1.2" fill="none"/><path d="M23.0 100.5 L24.5 102.4 L26.0 101.1 L26.8 100.5 L28.3 102.8 L29.8 100.8 L30.6 103.8 L32.1 101.0 L33.2 102.0 L34.0 100.7 L35.1 102.3 L36.2 101.3 L37.3 102.3 L38.4 102.2 L39.9 100.6 L41.4 102.5 L42.9 101.0 L43.7 101.7 L44.5 102.6 L45.3 102.5 L46.4 103.0 L47.2 99.2 L48.0 99.7 L49.5 101.2 L51.0 102.9 L51.8 101.3 L52.9 102.8 L53.7 100.7 L54.8 102.5 L56.3 100.9 L57.1 102.5 L57.9 100.1 L59.0 102.4 L60.1 100.7 L61.6 102.0 L63.1 99.1 L63.9 103.1 L65.4 100.9 L66.2 102.3 L67.0 100.6 L67.8 102.8 L68.9 101.7 L70.4 99.7 L71.5 101.7 L72.3 100.3 L73.4 102.2 L74.5 101.2 L76.0 102.8 L76.8 102.1 L77.9 101.7 L79.0 102.9 L80.5 100.6 L81.3 101.7 L82.8 101.1 L83.9 102.9 L85.4 100.8 L86.9 101.4 L88.4 101.7 L89.2 100.6 L90.3 102.7 L91.1 101.1 L91.9 102.9 L93.4 101.7 L94.2 100.6 L95.3 103.1 L96.4 100.3 L97.5 102.6 L99.0 99.6 L99.8 102.3 L100.9 102.5 L102.0 102.0 L103.1 100.2 L104.2 102.3 L105.7 102.2 L106.8 100.9 L107.9 102.2 L109.4 99.8 L110.9 101.7 L112.4 101.7 L113.9 102.6 L114.7 99.6 L116.2 100.1 L117.0 101.1 L118.5 101.7 L119.3 103.1 L120.4 101.3 L121.2 103.1 L122.3 101.0 L123.1 103.3 L123.9 102.2 L125.4 99.7 L126.9 101.7 L127.7 100.7 L129.2 104.0 L130.3 101.3 L131.8 100.3 L133.3 102.2 L134.1 99.0 L135.6 101.7 L137.1 101.0 L137.9 104.0 L139.0 100.2 L139.8 99.5 L141.3 102.8 L142.8 100.7 L143.6 104.4 L145.1 101.4 L146.2 103.0 L147.7 100.9 L148.5 103.8 L150.0 100.7 L150.8 100.6 L152.3 103.1 L153.4 101.7 L154.5 102.6 L155.3 101.3 L156.4 103.5 L157.5 101.0 L158.3 103.2 L159.4 101.7 L160.2 99.6 L161.0 104.8 L161.8 100.2 L162.6 102.1 L163.4 102.3 L164.2 101.3 L165.0 103.1 L166.1 101.2 L167.6 101.0 L169.1 100.5 L170.6 103.9 L172.1 102.1 L173.2 100.7 L174.3 102.4 L175.8 103.6 L177.3 103.1 L178.1 100.7 L179.2 101.1 L180.7 101.7 L181.8 101.7 L182.9 102.1 L184.4 101.7 L185.9 102.3 L187.4 101.4 L188.5 101.7 L189.0 95.8 L189.5 89.4 L190.0 83.9 L190.5 79.4 L191.0 75.8 L191.5 73.2 L192.0 71.3 L192.5 70.3 L193.0 69.9 L193.5 69.9 L194.0 69.9 L194.5 70.7 L195.3 68.5 L196.1 70.9 L196.9 68.9 L197.7 71.7 L198.5 68.9 L199.3 69.9 L200.8 72.1 L201.9 68.6 L202.7 70.5 L203.8 68.8 L205.3 69.2 L206.4 71.6 L207.9 68.4 L209.0 70.3 L210.1 69.1 L210.9 70.6 L212.4 68.3 L213.5 70.3 L214.3 69.9 L215.1 70.9 L216.2 69.2 L217.0 70.2 L218.5 71.6 L219.6 69.1 L221.1 70.6 L221.9 68.1 L222.7 71.1 L224.2 69.4 L225.3 70.9 L226.8 67.7 L228.3 70.6 L229.8 69.2 L230.6 71.8 L232.1 69.9 L233.2 71.3 L234.7 69.1 L235.8 70.8 L236.6 69.2 L238.1 70.5 L239.2 68.5 L240.7 70.3 L241.5 71.2 L243.0 69.2 L244.5 71.5 L245.3 69.4 L246.1 70.9 L247.2 69.2 L248.3 71.6 L249.8 69.3 L251.3 70.4 L252.4 69.9 L253.9 70.4 L254.7 68.7 L256.2 71.4 L257.0 69.4 L258.1 72.1 L259.6 71.5 L260.4 71.0 L261.2 68.9 L262.7 71.1 L263.5 71.8 L264.6 71.3 L266.1 68.1 L267.2 68.3 L268.0 72.3 L269.1 69.9 L270.2 69.0 L271.0 68.8 L271.8 70.7 L272.6 71.4 L274.1 68.0 L275.6 71.1 L276.4 71.5 L277.2 69.5 L278.0 71.6 L278.8 69.9 L280.3 67.8 L281.1 71.2 L281.9 68.7 L283.0 71.6 L284.5 69.5 L286.0 71.0 L287.5 70.8 L288.3 68.5 L289.4 70.3 L290.9 69.6 L292.0 69.6 L293.1 72.5 L293.9 68.6 L295.4 72.1 L296.5 69.4 L298.0 70.5 L298.8 70.5 L299.6 70.4 L300.7 68.8 L302.2 70.6 L303.0 69.2 L303.8 71.0 L304.9 69.9 L306.4 69.9 L307.5 70.4 L308.6 69.3 L309.7 71.0 L310.8 68.3 L312.3 70.8 L313.8 72.2 L315.3 69.9 L316.1 71.1 L317.2 70.3 L318.3 71.6 L319.1 69.9 L320.6 69.2 L321.4 69.9 L322.5 70.5 L323.6 69.0 L324.4 70.4 L325.2 70.3 L326.7 71.3 L328.2 71.8 L329.0 68.5 L329.8 70.4 L331.3 69.4 L332.1 69.5 L333.2 69.9 L334.3 71.2 L335.4 69.0 L336.5 68.8 L338.0 69.1 L339.1 70.8 L339.9 69.2 L341.0 70.2 L342.5 68.9 L343.6 68.6 L344.4 70.3 L345.5 72.7 L347.0 69.9 L348.5 67.2 L349.3 70.4 L350.8 69.4 L352.3 70.6 L353.1 68.2 L354.2 70.9 L355.0 68.7 L356.1 72.5 L357.2 68.6 L358.7 70.6 L359.8 68.9 L361.3 69.9 L362.8 71.5 L363.9 69.4 L365.0 71.1 L366.1 68.6 L367.2 70.3 L368.7 71.6 L369.8 68.8 L370.9 70.9 L371.7 67.4 L372.8 69.9 L373.6 68.2 L375.1 69.0 L375.9 70.5 L377.4 71.3 L378.9 71.8 L380.0 70.5 L381.5 69.9 L382.6 70.3 L384.1 68.1 L385.6 69.5 L386.4 70.7 L387.5 71.2 L388.3 68.9 L389.4 71.2 L390.9 69.0 L392.4 70.7 L393.5 69.5 L394.3 69.9 L395.8 69.5 L397.3 70.9 L398.8 70.4 L400.3 68.7 L401.1 70.2 L402.6 68.9 L403.4 69.2 L404.2 69.1 L405.3 69.6 L406.1 69.1 L407.2 68.9 L408.0 71.4 L409.1 69.5 L409.9 70.3 L411.4 68.9 L412.9 70.9 L414.4 69.9 L415.5 69.9 L416.6 68.4 L417.7 69.3 L418.8 71.2 L419.9 69.2 L421.0 70.6 L421.8 68.4 L423.3 70.6 L424.4 69.6 L425.2 69.2 L426.3 70.4 L427.4 69.3 L428.5 69.3 L429.6 70.2 L430.4 68.9 L431.5 70.3 L433.0 69.4 L433.8 68.3 L435.3 71.6 L436.1 68.4 L437.6 71.5 L439.1 70.4 L440.6 69.1 L442.1 70.5 L443.2 68.8 L444.3 70.7 L445.4 69.3 L446.2 72.2 L447.7 69.6 L448.5 72.2 L450.0 70.5 L450.8 69.9 L451.9 70.4 L453.0 70.4 L454.1 69.5 L455.2 69.1 L456.3 69.9 L457.8 68.9 L458.6 71.0 L459.7 69.1 L460.8 69.2 L462.3 70.3 L463.4 69.9 L464.2 70.4 L465.7 69.9 L467.2 71.3 L468.7 71.2 L469.8 68.7 L470.6 70.6 L471.4 68.3 L472.9 69.4 L474.0 71.1 L474.8 69.1 L476.3 72.2 L477.1 70.8 L478.6 68.0 L479.4 71.0 L480.5 70.2 L481.6 68.7 L482.4 68.6 L483.9 71.4 L485.4 68.9 L486.2 70.5 L487.0 69.9 L488.5 69.9 L489.3 70.7 L490.4 67.1 L491.2 68.5 L492.0 71.8 L493.1 69.2 L494.6 71.1 L496.1 69.2 L497.6 71.4 L498.4 70.8 L499.2 72.0 L500.3 69.0 L501.1 70.3 L502.2 68.7 L503.3 70.2 L504.4 69.6 L505.5 69.1 L506.6 71.9 L508.1 68.4 L509.6 70.6 L510.7 71.8 L512.2 70.8 L513.0 69.6 L514.5 70.4 L515.3 68.6 L516.4 68.4 L517.9 71.5 L518.7 69.9 L520.2 69.4 L521.7 70.3 L522.8 68.7 L523.9 70.3 L525.4 69.3 L526.5 70.6 L527.6 69.5 L528.4 70.2 L529.5 69.5 L530.6 69.9 L531.4 71.3 L532.9 69.9 L533.7 69.1 L534.5 71.8 L535.3 68.3 L536.1 71.1 L536.9 68.7 L538.0 71.4 L538.8 69.6 L540.3 71.0 L541.1 69.2 L541.9 70.9 L543.4 68.9 L544.5 71.7 L545.6 69.6 L547.1 67.7 L548.2 72.2 L549.7 69.3 L550.8 69.9 L551.6 69.4 L552.7 70.6 L553.8 69.9 L554.6 69.2 L555.7 70.5 L557.2 69.9 L558.0 70.2 L559.1 68.5 L559.9 71.5 L560.7 69.4 L562.2 70.4 L563.7 69.9 L564.8 69.1 L565.9 71.9 L566.7 69.3 L567.5 71.1 L568.6 68.6 L570.1 73.0 L571.2 69.0 L572.3 70.5 L573.4 68.7 L574.5 70.8 L575.6 70.5 L577.1 70.3 L578.2 69.4 L579.3 71.5 L580.4 69.6 L581.9 70.3 L582.7 70.7 L583.5 70.6 L585.0 69.0 L586.1 70.3 L587.6 67.8 L588.4 71.5 L589.2 69.1 L590.7 71.4 L591.5 69.9 L592.3 70.5 L593.4 70.2 L594.2 67.9 L595.7 70.2 L596.5 70.7 L597.6 71.7 L598.7 69.5 L599.8 69.9 L600.6 70.2 L602.1 69.5 L603.6 70.9 L604.4 68.9 L605.2 70.2 L606.0 69.9 L606.8 70.4 L608.3 70.5 L609.8 68.2 L610.6 70.5 L611.4 69.6 L612.5 71.1 L613.3 71.7 L614.1 69.2 L614.9 70.9 L616.0 70.6 L617.5 69.9 L619.0 69.9 L620.5 69.6 L621.6 71.0 L623.1 68.0 L623.9 70.7 L625.0 68.9 L626.1 69.1 L627.6 71.1 L628.4 69.6 L629.2 70.7 L630.7 69.1 L631.5 70.2 L632.3 69.3 L633.4 71.2 L634.2 70.8 L635.3 69.0 L636.8 68.2 L637.9 72.2 L639.4 69.0 L640.9 71.7 L642.0 69.6 L642.8 70.4 L643.9 70.6 L645.0 69.2 L646.1 70.4 L646.9 69.2 L647.7 69.9 L648.8 68.4 L649.6 71.8 L650.7 68.6 L651.8 71.4 L652.6 71.2 L654.1 69.0 L655.2 71.4 L656.3 68.1 L657.1 69.3 L658.2 70.7 L659.3 69.0 L660.1 70.2 L661.6 69.0 L662.7 69.9 L663.8 68.6 L665.3 71.1 L666.8 68.6 L667.9 69.9 L669.0 69.6 L669.8 69.9 L671.3 70.3 L672.4 68.4 L673.9 71.4 L674.7 67.3 L676.2 70.4 L677.3 68.5 L678.4 69.1 L679.9 70.9 L681.4 69.6 L682.9 71.6 L683.7 70.8 L684.8 68.7 L686.3 70.3 L687.1 68.2 L688.6 69.9 L689.4 67.5 L690.2 69.9 L691.0 68.7" stroke="#e6e600" stroke-width="1.2" fill="none"/><path d="M23.0 172.7 L23.8 171.8 L25.3 171.9 L26.8 172.7 L27.6 171.7 L29.1 172.4 L30.6 172.7 L31.7 172.7 L32.5 172.7 L33.3 172.7 L34.4 172.5 L35.9 172.7 L37.4 172.2 L38.5 172.7 L39.6 170.8 L41.1 172.7 L42.2 172.7 L43.7 172.7 L44.8 171.2 L46.3 172.7 L47.4 172.7 L48.9 171.8 L49.7 171.9 L50.8 171.2 L52.3 172.7 L53.4 172.7 L54.9 172.5 L55.7 172.7 L56.8 172.6 L57.6 172.7 L58.7 172.3 L59.8 172.7 L60.6 172.2 L61.7 172.7 L62.8 172.2 L64.3 172.4 L65.8 172.7 L66.6 170.8 L67.4 172.7 L68.9 172.7 L69.7 172.7 L71.2 172.3 L72.3 172.7 L73.1 172.7 L74.2 172.7 L75.0 172.7 L76.5 171.0 L77.3 171.1 L78.4 172.7 L79.9 172.7 L81.0 172.7 L81.8 171.7 L82.6 172.7 L84.1 172.5 L84.9 172.6 L86.0 172.7 L87.1 172.2 L88.6 172.7 L90.1 172.7 L90.9 171.8 L91.7 171.3 L92.8 172.7 L93.6 172.7 L95.1 172.6 L95.9 170.3 L96.7 172.7 L98.2 171.4 L99.0 171.6 L99.8 172.7 L100.6 172.7 L102.1 172.7 L103.6 172.7 L104.7 172.7 L105.5 172.6 L106.6 171.4 L108.1 170.8 L109.2 172.7 L110.0 171.9 L111.5 172.7 L112.6 172.7 L114.1 170.4 L115.2 171.5 L116.7 172.7 L117.8 172.7 L119.3 170.9 L120.4 172.4 L121.9 172.7 L122.7 172.7 L123.5 172.4 L124.6 171.4 L125.4 172.2 L126.5 172.7 L128.0 171.9 L128.8 172.7 L130.3 170.9 L131.8 172.7 L132.6 172.7 L133.4 172.4 L134.5 172.7 L136.0 172.7 L137.1 171.8 L138.6 172.7 L140.1 172.6 L141.2 172.7 L142.0 171.3 L142.8 171.7 L143.9 170.5 L145.0 172.7 L145.8 172.5 L146.6 172.7 L147.7 171.6 L148.5 172.7 L149.6 172.7 L150.7 172.7 L152.2 172.7 L153.0 172.6 L153.8 171.7 L154.9 172.7 L155.7 170.6 L157.2 172.5 L158.7 170.8 L160.2 172.7 L161.3 172.7 L162.1 171.0 L163.2 172.7 L164.7 172.2 L165.5 171.0 L166.6 172.7 L167.4 171.1 L168.9 172.4 L169.7 172.7 L170.8 172.7 L172.3 172.7 L173.4 172.7 L174.5 172.7 L175.3 172.7 L176.8 172.7 L178.3 172.7 L179.4 171.3 L180.2 172.7 L181.3 172.7 L182.8 171.2 L183.6 172.7 L184.4 172.4 L185.2 172.7 L186.0 171.6 L187.1 172.7 L188.6 172.7 L190.1 172.7 L190.9 172.7 L192.4 172.7 L193.2 172.3 L194.0 172.2 L194.8 172.0 L195.9 171.4 L196.7 172.7 L197.8 172.2 L198.9 172.3 L200.4 171.0 L201.5 172.7 L202.6 172.7 L204.1 171.6 L205.6 171.1 L206.4 171.3 L207.5 172.7 L208.6 172.7 L210.1 172.6 L211.2 171.3 L212.3 172.0 L213.4 172.7 L214.9 171.7 L215.7 172.5 L216.5 172.7 L217.6 172.5 L218.7 172.5 L219.8 170.4 L220.9 172.7 L221.7 171.8 L222.5 172.1 L223.3 171.6 L224.1 171.2 L225.2 172.7 L226.3 172.7 L227.4 172.7 L228.5 171.9 L230.0 172.7 L230.8 172.1 L231.9 172.7 L233.0 172.7 L233.8 172.7 L234.9 172.7 L236.4 172.7 L237.2 172.4 L238.7 171.3 L239.5 172.7 L240.3 171.0 L241.1 172.7 L242.2 172.6 L243.7 172.7 L244.8 170.2 L245.9 171.4 L246.7 172.7 L248.2 171.2 L249.7 172.7 L251.2 172.3 L252.0 171.6 L252.8 172.4 L253.6 172.7 L254.4 172.7 L255.9 172.7 L257.4 172.1 L258.2 172.7 L259.7 172.6 L261.2 172.7 L262.3 172.7 L263.4 172.7 L264.2 172.7 L265.0 172.6 L265.8 171.7 L267.3 172.3 L268.4 171.4 L269.2 171.4 L270.0 172.7 L271.5 172.7 L272.3 169.9 L273.8 171.7 L275.3 172.0 L276.1 172.7 L277.6 172.7 L278.7 172.2 L279.8 172.3 L281.3 172.7 L282.4 172.6 L283.2 172.7 L284.3 172.7 L284.8 172.7 L285.3 164.5 L285.8 157.6 L286.3 151.9 L286.8 147.5 L287.3 144.2 L287.8 142.0 L288.3 140.8 L288.8 140.5 L289.3 140.5 L289.8 141.4 L291.3 138.8 L292.4 138.3 L293.5 141.6 L295.0 140.8 L296.5 141.0 L297.3 142.4 L298.4 139.9 L299.5 141.3 L300.3 140.1 L301.8 140.9 L303.3 140.1 L304.1 141.3 L305.6 142.0 L307.1 138.0 L308.6 142.0 L310.1 140.1 L310.9 142.4 L312.4 139.7 L313.5 140.9 L314.3 139.4 L315.1 142.0 L315.9 140.5 L317.4 141.4 L318.2 139.1 L319.0 141.1 L320.5 138.8 L322.0 141.4 L322.8 140.8 L323.6 139.8 L324.7 142.2 L325.8 139.6 L326.9 138.3 L328.4 141.1 L329.5 139.9 L331.0 141.9 L332.5 141.4 L333.6 140.2 L334.7 141.5 L335.5 139.6 L336.6 140.5 L338.1 138.5 L338.9 140.5 L340.0 139.9 L341.1 138.5 L341.9 140.5 L343.4 140.1 L344.2 142.6 L345.0 140.5 L346.5 140.0 L347.6 141.0 L348.7 141.4 L349.8 140.2 L350.9 141.0 L351.7 140.1 L352.8 142.7 L353.9 138.3 L355.4 140.8 L356.9 139.4 L358.0 140.5 L358.8 141.9 L359.9 139.2 L361.0 142.0 L361.8 139.5 L362.9 140.8 L364.4 140.2 L365.5 142.2 L366.6 139.8 L367.7 142.4 L369.2 139.9 L370.7 140.0 L371.5 139.7 L372.6 140.5 L374.1 142.3 L374.9 140.2 L376.0 140.2 L376.8 140.9 L378.3 139.2 L379.1 140.5 L379.9 139.9 L381.0 141.4 L381.8 142.4 L382.9 141.5 L384.0 139.1 L385.1 140.9 L386.2 140.5 L387.3 141.1 L388.4 141.7 L389.5 141.0 L391.0 142.5 L391.8 139.2 L393.3 141.0 L394.8 139.2 L395.6 142.2 L397.1 139.6 L398.2 141.3 L399.0 140.2 L399.8 141.9 L400.9 140.2 L402.4 140.9 L403.5 139.5 L404.3 140.1 L405.4 139.9 L406.2 141.1 L407.7 139.7 L408.8 140.2 L409.6 141.7 L410.4 138.7 L411.5 141.2 L412.6 140.5 L413.4 140.9 L414.5 140.1 L416.0 139.3 L416.8 142.0 L418.3 140.8 L419.1 139.4 L420.2 142.4 L421.3 139.3 L422.1 140.8 L423.6 139.4 L425.1 140.5 L426.6 143.0 L427.4 138.9 L428.5 140.5 L429.3 139.7 L430.4 141.3 L431.9 139.9 L432.7 140.5 L433.8 138.5 L435.3 141.3 L436.4 139.8 L437.2 141.8 L438.0 139.5 L438.8 141.7 L439.9 140.5 L440.7 141.9 L441.5 138.5 L443.0 141.3 L444.5 141.3 L445.3 142.4 L446.8 139.2 L447.6 141.0 L449.1 137.8 L449.9 141.3 L450.7 139.7 L452.2 141.3 L453.3 140.5 L454.1 140.5 L455.2 139.7 L456.3 142.2 L457.4 139.9 L458.9 140.1 L460.0 138.6 L461.1 140.9 L462.6 141.9 L464.1 140.2 L465.2 140.5 L466.7 140.0 L468.2 138.4 L469.3 140.5 L470.8 139.5 L472.3 142.8 L473.1 139.9 L474.6 141.9 L476.1 140.1 L476.9 141.5 L477.7 143.8 L478.8 140.5 L479.9 139.6 L481.4 139.5 L482.5 140.5 L483.3 142.5 L484.4 138.7 L485.9 141.4 L486.7 140.1 L487.5 142.2 L489.0 141.4 L490.5 140.8 L492.0 140.8 L493.1 138.4 L493.9 141.1 L495.4 138.4 L496.9 141.5 L498.0 140.5 L499.1 140.5 L499.9 140.5 L500.7 141.4 L501.5 140.2 L502.3 141.5 L503.1 141.1 L504.6 140.5 L505.7 139.4 L506.5 141.6 L507.3 141.5 L508.4 139.8 L509.5 140.5 L511.0 139.6 L512.1 141.8 L513.2 139.7 L514.3 139.2 L515.8 138.8 L516.9 141.0 L517.7 141.2 L519.2 140.2 L520.7 141.9 L521.8 139.6 L522.6 140.5 L523.7 139.6 L524.8 142.0 L525.6 139.8 L527.1 141.6 L528.2 142.6 L529.3 138.8 L530.8 140.8 L531.9 140.0 L533.0 141.0 L534.5 139.7 L535.3 141.4 L536.1 140.5 L537.2 139.3 L538.7 141.4 L540.2 142.2 L541.7 139.3 L543.2 142.0 L544.3 139.5 L545.4 142.5 L546.5 138.4 L547.3 141.3 L548.4 139.2 L549.2 140.8 L550.3 141.3 L551.4 139.7 L552.9 141.5 L554.0 142.8 L554.8 139.2 L556.3 141.1 L557.8 139.7 L558.9 138.9 L559.7 141.4 L560.5 141.7 L561.3 142.2 L562.4 139.4 L563.2 139.1 L564.0 140.2 L565.1 141.0 L566.6 140.1 L568.1 141.3 L569.6 140.1 L571.1 141.0 L571.9 139.7 L573.0 140.0 L573.8 142.1 L574.9 140.8 L576.4 139.5 L577.9 139.3 L579.4 138.9 L580.2 141.3 L581.3 139.6 L582.1 142.1 L583.2 139.9 L584.7 139.2 L586.2 141.5 L587.0 140.0 L588.5 139.6 L590.0 140.0 L591.5 141.8 L592.3 140.5 L593.8 138.9 L594.6 141.6 L595.4 139.9 L596.5 141.0 L597.6 140.2 L599.1 140.0 L599.9 141.1 L600.7 139.9 L601.8 140.9 L602.6 141.1 L604.1 139.6 L604.9 142.3 L606.4 141.1 L607.5 139.1 L608.6 141.3 L609.7 139.3 L610.8 139.3 L611.9 140.5 L613.0 139.1 L614.5 139.8 L615.3 141.3 L616.8 140.1 L617.6 140.5 L619.1 139.4 L619.9 140.0 L620.7 138.3 L621.5 141.6 L623.0 139.7 L623.8 142.2 L624.9 138.4 L626.0 142.7 L627.5 140.5 L628.3 140.9 L629.8 140.0 L630.9 141.1 L632.0 137.6 L633.5 141.0 L635.0 140.1 L636.5 141.8 L638.0 140.9 L639.5 140.1 L640.3 140.5 L641.8 142.6 L642.9 138.6 L644.4 141.2 L645.9 139.1 L647.4 141.0 L648.2 138.9 L649.3 141.2 L650.8 139.6 L651.9 141.2 L653.4 141.3 L654.9 141.4 L656.4 138.2 L657.2 142.1 L658.3 139.3 L659.8 141.0 L660.6 139.3 L662.1 140.0 L663.6 141.4 L664.4 140.2 L665.5 142.0 L666.6 139.8 L667.4 140.5 L668.2 139.6 L669.7 140.1 L671.2 141.4 L672.0 139.8 L672.8 139.2 L673.6 141.1 L675.1 139.6 L676.2 139.8 L677.3 141.2 L678.8 139.7 L679.6 141.4 L680.4 139.2 L681.5 141.2 L683.0 140.5 L683.8 141.1 L685.3 141.9 L686.8 141.0 L687.6 138.9 L688.4 138.5 L689.9 140.0 L691.0 141.2" stroke="#10c8d8" stroke-width="1.2" fill="none"/><path d="M23.0 272.0 L24.5 273.5 L26.0 271.5 L27.5 273.6 L29.0 272.0 L29.8 271.3 L31.3 271.3 L32.8 271.8 L33.9 272.6 L34.7 272.6 L35.8 272.9 L36.6 271.6 L38.1 273.0 L39.6 272.2 L40.4 272.9 L41.5 272.3 L42.3 274.2 L43.8 273.8 L44.9 271.2 L46.0 271.3 L46.8 272.6 L48.3 273.0 L49.4 271.8 L50.9 273.0 L52.0 272.6 L53.1 271.3 L54.2 271.4 L55.0 275.0 L56.5 273.3 L58.0 272.6 L59.1 272.6 L60.6 272.0 L62.1 272.9 L62.9 270.4 L64.0 274.2 L64.8 272.6 L66.3 274.1 L67.8 271.5 L68.6 273.2 L69.4 272.1 L70.9 274.0 L72.4 271.0 L73.2 273.1 L74.3 271.8 L75.4 271.7 L76.5 273.0 L77.3 271.9 L78.1 274.1 L78.9 272.0 L79.7 272.9 L80.5 271.6 L82.0 272.9 L82.8 272.1 L83.6 270.9 L84.7 274.7 L85.5 271.2 L87.0 274.6 L88.5 274.1 L90.0 271.1 L91.1 274.0 L92.2 270.4 L93.0 273.2 L93.8 270.6 L94.9 272.6 L95.7 273.6 L96.5 272.6 L97.3 273.7 L98.1 271.4 L99.2 273.7 L100.3 274.0 L101.8 271.8 L102.9 273.0 L104.0 272.9 L104.8 271.7 L105.9 272.2 L107.0 273.5 L108.5 273.1 L110.0 274.3 L111.1 271.4 L111.9 273.3 L113.0 270.6 L114.1 273.5 L115.2 274.0 L116.7 272.2 L117.8 274.2 L118.9 271.3 L120.4 275.0 L121.5 272.1 L122.6 273.6 L123.4 271.1 L124.5 273.1 L125.6 271.7 L126.7 274.0 L127.5 271.4 L129.0 273.8 L130.5 270.9 L131.3 272.6 L132.8 272.1 L133.6 272.2 L134.7 274.0 L135.8 272.3 L137.3 275.0 L138.4 274.0 L139.2 274.2 L140.7 271.5 L141.8 273.0 L143.3 272.6 L144.1 274.3 L144.9 271.6 L146.4 274.0 L147.5 271.8 L148.3 271.9 L149.1 273.5 L150.2 273.2 L151.7 270.7 L152.5 272.9 L153.6 271.5 L154.7 273.1 L155.8 271.6 L156.6 272.9 L157.7 271.3 L158.5 270.8 L160.0 272.6 L161.5 271.3 L163.0 271.9 L164.5 273.6 L165.6 271.8 L166.7 274.1 L168.2 272.6 L169.7 270.6 L171.2 271.9 L172.7 273.7 L173.5 272.6 L175.0 274.4 L176.1 270.5 L177.2 273.8 L178.3 272.6 L179.1 273.3 L180.2 270.8 L181.7 273.9 L182.5 271.4 L184.0 273.4 L185.1 272.3 L185.9 273.2 L186.7 272.2 L188.2 272.9 L189.3 271.9 L190.4 273.0 L191.2 272.1 L192.7 270.5 L193.5 274.0 L195.0 273.8 L196.5 272.0 L197.6 272.6 L199.1 271.5 L200.2 274.7 L201.3 271.5 L202.4 273.1 L203.2 271.8 L204.7 272.6 L205.8 271.6 L206.9 272.6 L207.7 271.7 L208.8 273.5 L210.3 273.8 L211.8 272.9 L212.6 271.4 L213.4 271.7 L214.5 275.0 L215.6 271.5 L217.1 274.2 L218.2 271.4 L219.3 271.6 L220.1 273.8 L221.2 274.7 L222.0 271.3 L223.1 273.3 L224.6 273.0 L226.1 272.2 L227.2 270.6 L228.0 273.2 L229.5 274.0 L230.3 274.0 L231.1 273.3 L232.6 271.7 L233.4 271.5 L234.2 271.9 L235.3 271.6 L236.4 274.0 L237.2 273.3 L238.7 274.2 L239.8 274.6 L241.3 271.3 L242.1 273.6 L243.6 273.8 L244.4 272.6 L245.2 271.1 L246.7 272.9 L247.5 271.1 L248.6 272.9 L249.4 274.4 L250.5 271.8 L252.0 273.2 L253.1 272.2 L254.6 273.1 L256.1 271.9 L257.2 273.7 L258.0 274.1 L259.5 271.4 L261.0 272.6 L262.5 271.8 L263.3 273.6 L264.4 272.6 L265.9 270.7 L267.4 272.1 L268.2 272.2 L269.0 273.0 L270.5 271.2 L271.6 274.7 L273.1 271.6 L273.9 271.6 L275.0 273.7 L276.5 272.1 L278.0 273.5 L278.8 271.4 L279.9 273.2 L280.7 274.3 L282.2 272.3 L283.7 273.6 L284.8 270.2 L286.3 274.0 L287.4 272.2 L288.2 273.5 L289.0 273.6 L290.1 272.6 L291.6 274.5 L292.4 274.4 L293.2 271.6 L294.0 273.7 L294.8 272.2 L296.3 275.4 L297.8 271.8 L298.9 274.5 L299.7 270.9 L300.8 273.8 L302.3 271.0 L303.8 273.8 L305.3 272.6 L306.8 272.6 L307.6 273.3 L308.7 273.0 L309.8 273.5 L311.3 271.3 L312.8 273.7 L313.6 273.4 L314.4 271.2 L315.5 270.3 L316.6 272.6 L317.4 273.0 L318.9 271.2 L319.7 274.0 L320.8 273.2 L321.9 271.5 L323.0 273.3 L324.1 271.1 L324.9 272.6 L326.0 271.8 L326.8 272.0 L327.6 272.6 L328.7 273.2 L329.5 270.5 L331.0 272.9 L331.8 273.0 L333.3 272.1 L334.4 272.6 L335.5 272.3 L337.0 272.0 L338.1 273.8 L338.9 271.4 L340.4 273.8 L341.5 271.9 L342.6 273.5 L343.4 271.7 L344.2 274.4 L345.0 271.6 L345.8 273.6 L346.6 270.8 L348.1 271.1 L349.6 272.6 L350.4 273.2 L351.2 271.7 L352.0 272.6 L352.5 272.6 L353.0 267.3 L353.5 256.0 L354.0 247.4 L354.5 241.1 L355.0 237.2 L355.5 235.4 L356.0 235.2 L356.5 235.2 L357.0 236.4 L358.5 237.0 L359.6 233.2 L361.1 233.7 L362.6 235.9 L363.4 236.4 L364.9 235.2 L365.7 234.5 L366.8 236.4 L367.9 235.2 L368.7 234.0 L369.5 237.0 L370.6 235.2 L371.4 234.2 L372.5 236.1 L374.0 234.2 L375.5 234.9 L376.3 233.9 L377.8 236.1 L379.3 235.8 L380.4 234.6 L381.2 236.3 L382.3 236.1 L383.4 233.2 L384.2 235.2 L385.7 233.9 L386.5 236.4 L387.6 234.3 L388.4 233.9 L389.5 235.6 L390.6 234.4 L392.1 236.2 L393.6 235.5 L394.7 234.6 L395.5 237.3 L396.3 232.9 L397.4 234.9 L398.2 234.1 L399.3 235.6 L400.8 236.5 L402.3 235.5 L403.1 234.5 L404.6 235.2 L405.4 233.7 L406.5 235.2 L407.3 234.4 L408.4 236.1 L409.5 236.4 L410.6 233.7 L411.4 236.1 L412.5 236.1 L413.6 237.6 L415.1 234.6 L416.2 236.0 L417.7 234.8 L418.5 236.0 L419.3 235.2 L420.1 236.4 L420.9 235.2 L422.4 234.2 L423.5 236.7 L425.0 234.5 L425.8 235.5 L426.6 235.6 L427.7 235.9 L429.2 233.5 L430.0 233.6 L430.8 235.2 L431.6 234.8 L432.4 236.2 L433.9 234.6 L434.7 235.5 L435.5 234.2 L437.0 234.1 L438.1 236.6 L439.2 235.2 L440.7 235.2 L441.5 234.7 L442.6 236.8 L443.7 236.9 L445.2 232.5 L446.3 236.9 L447.4 235.2 L448.9 235.9 L449.7 234.6 L450.8 237.8 L451.6 236.3 L452.4 234.6 L453.9 236.5 L455.4 234.7 L456.5 234.6 L457.3 234.5 L458.1 235.5 L458.9 234.2 L459.7 235.2 L460.8 234.0 L462.3 236.6 L463.8 236.7 L464.6 236.0 L465.7 233.4 L466.8 234.1 L467.9 236.5 L468.7 233.9 L470.2 233.6 L471.3 234.7 L472.1 235.6 L472.9 234.9 L474.0 235.2 L474.8 235.8 L475.6 233.8 L476.7 235.5 L477.5 233.7 L478.6 236.2 L480.1 234.5 L481.2 235.5 L482.7 235.9 L483.8 234.2 L485.3 235.9 L486.1 234.5 L487.2 235.6 L488.7 235.2 L490.2 236.4 L491.0 235.2 L491.8 237.4 L492.6 233.3 L493.4 235.6 L494.9 233.7 L496.0 236.6 L497.5 234.7 L498.6 235.6 L499.7 234.6 L500.5 234.6 L501.3 236.1 L502.1 234.1 L503.6 235.7 L504.4 234.1 L505.2 236.1 L506.3 235.2 L507.4 236.8 L508.5 233.7 L510.0 235.8 L510.8 237.2 L512.3 237.1 L513.4 236.4 L514.5 234.8 L515.6 235.2 L517.1 236.0 L518.6 234.5 L519.4 237.5 L520.5 234.8 L521.3 236.8 L522.1 234.8 L522.9 235.2 L524.0 234.6 L525.5 236.2 L526.3 234.3 L527.8 235.6 L528.9 233.8 L530.0 236.2 L531.1 233.8 L532.2 235.6 L533.7 234.6 L534.8 235.2 L535.6 234.3 L536.7 236.2 L537.8 234.3 L538.9 237.5 L540.0 233.1 L541.1 234.6 L542.2 234.6 L543.3 235.5 L544.4 236.4 L545.5 234.6 L546.6 236.4 L547.4 234.6 L548.5 234.7 L549.3 233.9 L550.4 236.0 L551.5 234.3 L552.6 233.8 L553.4 236.1 L554.9 236.5 L555.7 237.1 L556.5 232.8 L557.6 234.4 L558.7 236.4 L559.8 234.5 L560.9 234.1 L561.7 234.3 L563.2 233.2 L564.3 234.5 L565.8 236.1 L566.9 234.7 L568.4 236.4 L569.2 233.9 L570.0 236.3 L570.8 233.7 L572.3 235.7 L573.8 236.9 L574.9 234.9 L576.4 234.8 L577.2 236.0 L578.3 234.0 L579.1 235.2 L580.2 236.4 L581.3 234.8 L582.1 237.7 L583.2 234.6 L584.0 234.2 L584.8 234.7 L585.9 235.9 L587.4 234.2 L588.2 234.7 L589.0 234.4 L590.5 234.5 L591.6 234.0 L593.1 237.0 L594.6 233.9 L595.4 236.4 L596.9 234.8 L598.0 234.1 L599.5 235.6 L600.6 234.4 L601.7 236.8 L602.8 234.0 L603.9 234.7 L605.4 236.0 L606.9 234.8 L608.4 235.9 L609.5 234.0 L610.6 236.0 L611.7 237.3 L612.8 234.1 L613.6 236.7 L614.4 233.6 L615.2 236.3 L616.0 235.2 L616.8 236.1 L617.9 236.3 L618.7 234.0 L619.8 235.7 L620.6 233.4 L621.4 237.0 L622.9 233.8 L623.7 236.6 L625.2 232.4 L626.3 233.6 L627.8 234.7 L628.9 235.6 L629.7 234.3 L630.5 236.9 L631.6 234.0 L632.4 237.8 L633.2 235.2 L634.0 235.2 L635.5 233.9 L636.3 236.0 L637.1 233.6 L638.6 235.2 L639.4 236.0 L640.2 235.2 L641.3 235.5 L642.8 236.6 L644.3 235.9 L645.1 233.4 L646.2 235.5 L647.0 234.5 L648.5 233.5 L650.0 235.7 L651.5 234.7 L652.6 237.7 L653.4 234.3 L654.2 236.0 L655.0 236.3 L655.8 234.1 L657.3 235.9 L658.4 233.6 L659.5 236.2 L661.0 234.4 L662.5 234.9 L663.3 236.0 L664.4 234.6 L665.5 236.2 L667.0 235.9 L668.1 233.9 L669.2 235.7 L670.7 234.3 L671.5 234.9 L672.3 235.2 L673.8 233.6 L675.3 235.5 L676.4 235.2 L677.9 235.9 L679.0 234.3 L679.8 234.1 L680.9 236.4 L682.0 235.5 L683.5 235.2 L684.6 235.7 L685.7 235.8 L686.5 235.2 L687.6 237.2 L689.1 235.2 L690.6 234.0 L691.4 235.7" stroke="#e020e0" stroke-width="1.2" fill="none"/><path d="M23.0 308.8 L23.8 310.1 L25.3 306.3 L26.8 309.9 L28.3 308.7 L29.1 310.3 L29.9 307.5 L31.0 310.3 L32.1 308.1 L32.9 308.0 L34.4 310.0 L35.9 307.7 L37.0 310.3 L38.1 309.4 L39.2 309.0 L40.7 309.7 L42.2 309.0 L43.3 309.9 L44.1 308.8 L45.2 310.2 L46.7 309.1 L48.2 309.7 L49.3 309.0 L50.8 308.8 L51.9 309.4 L53.4 308.5 L54.2 310.6 L55.3 308.5 L56.1 310.9 L57.2 310.1 L58.0 308.8 L59.5 310.3 L61.0 307.7 L62.1 307.4 L63.2 310.1 L64.0 310.6 L65.5 311.4 L67.0 309.4 L67.8 311.3 L69.3 309.4 L70.1 310.1 L70.9 308.7 L72.4 309.8 L73.9 308.7 L74.7 310.2 L75.8 310.9 L76.6 308.9 L77.4 310.1 L78.5 309.7 L79.3 310.4 L80.1 308.7 L81.2 308.2 L82.7 310.7 L83.5 309.1 L84.3 310.9 L85.4 308.1 L86.5 307.7 L87.3 308.8 L88.4 308.8 L89.9 307.8 L91.0 308.9 L91.8 309.0 L92.9 309.8 L94.4 309.9 L95.2 308.8 L96.0 309.8 L96.8 309.0 L98.3 308.3 L99.4 308.8 L100.2 310.7 L101.7 308.2 L102.5 310.5 L103.6 307.4 L105.1 309.0 L105.9 311.7 L106.7 310.0 L107.8 310.0 L109.3 309.1 L110.4 310.0 L111.2 308.3 L112.7 310.8 L113.8 307.6 L115.3 310.2 L116.4 308.2 L117.5 310.0 L118.3 307.9 L119.1 311.0 L120.2 308.8 L121.7 307.6 L122.5 310.2 L124.0 308.1 L124.8 309.4 L126.3 309.4 L127.4 310.2 L128.5 307.4 L129.6 308.1 L131.1 310.4 L131.9 308.7 L133.0 308.4 L133.8 309.8 L135.3 308.0 L136.8 309.4 L137.9 308.3 L139.0 310.0 L140.1 309.8 L140.9 308.0 L142.4 310.8 L143.5 310.5 L144.6 307.9 L146.1 309.8 L147.6 309.4 L148.4 309.7 L149.9 309.4 L151.4 309.4 L152.9 308.7 L154.0 309.8 L154.8 307.0 L156.3 307.1 L157.1 310.8 L158.6 309.4 L159.7 309.9 L161.2 307.7 L162.7 310.7 L163.8 308.1 L164.9 309.8 L166.0 309.4 L166.8 310.3 L167.9 308.0 L169.0 309.4 L170.5 307.9 L171.3 310.2 L172.8 307.8 L173.6 310.7 L175.1 308.1 L176.2 309.4 L177.3 307.8 L178.1 310.2 L179.6 309.4 L180.4 309.4 L181.5 310.2 L183.0 307.7 L183.8 309.4 L185.3 310.0 L186.1 309.1 L187.2 310.0 L188.7 309.0 L189.5 310.0 L190.6 307.0 L191.7 310.9 L193.2 307.6 L194.3 310.3 L195.4 308.4 L196.5 310.3 L197.6 308.1 L198.7 309.4 L199.5 311.2 L200.6 306.4 L202.1 308.6 L203.6 309.4 L204.7 310.6 L205.5 308.5 L206.3 308.4 L207.1 311.2 L208.6 309.4 L210.1 310.4 L211.6 308.6 L212.4 308.4 L213.2 310.1 L214.7 309.4 L215.5 310.7 L217.0 308.8 L218.1 311.2 L219.6 309.4 L220.4 310.6 L221.2 309.4 L222.3 311.7 L223.1 306.1 L224.2 309.9 L225.3 308.9 L226.8 309.7 L228.3 308.6 L229.8 311.1 L231.3 309.0 L232.4 310.5 L233.2 309.0 L234.0 310.1 L235.5 308.4 L237.0 309.4 L237.8 309.4 L238.9 308.9 L239.7 310.6 L240.8 311.2 L242.3 308.4 L243.4 308.7 L244.5 308.8 L245.3 310.4 L246.4 308.1 L247.9 309.9 L249.0 307.4 L250.5 310.1 L251.6 307.6 L252.7 310.6 L253.5 309.4 L255.0 308.8 L255.8 310.7 L256.6 308.5 L257.4 307.9 L258.9 310.5 L260.4 310.1 L261.9 309.7 L263.4 310.7 L264.9 311.2 L265.7 308.0 L267.2 309.7 L268.0 308.2 L268.8 309.9 L269.9 307.3 L271.4 310.1 L272.5 307.3 L273.6 310.2 L274.7 308.2 L275.5 311.5 L276.3 310.8 L277.8 308.3 L278.6 310.1 L279.7 307.4 L280.8 310.4 L282.3 308.5 L283.1 310.9 L283.9 309.1 L284.7 310.8 L285.5 309.1 L286.3 309.8 L287.1 309.4 L288.2 309.4 L289.7 308.9 L290.5 309.4 L291.6 308.9 L292.4 311.6 L293.2 310.1 L294.7 308.9 L296.2 308.8 L297.7 308.4 L298.5 309.8 L299.3 308.7 L300.1 309.1 L300.9 309.4 L302.0 308.1 L303.5 308.5 L304.3 310.1 L305.4 310.3 L306.5 310.3 L307.3 308.7 L308.4 310.5 L309.2 309.9 L310.7 308.4 L311.8 307.9 L312.9 308.9 L314.4 309.9 L315.9 309.4 L316.7 312.2 L318.2 311.2 L319.0 308.1 L319.8 310.3 L320.9 307.8 L322.0 310.0 L323.5 311.3 L324.6 308.7 L325.4 309.0 L326.9 310.5 L328.4 309.9 L329.9 310.0 L330.7 308.4 L331.8 311.5 L333.3 309.1 L334.4 310.8 L335.5 310.3 L336.6 309.7 L337.7 309.1 L339.2 310.5 L340.0 307.3 L340.8 310.5 L341.6 309.4 L342.7 308.7 L343.5 309.1 L344.6 308.6 L346.1 308.6 L347.6 310.5 L349.1 307.8 L349.9 312.4 L351.0 308.7 L352.5 310.1 L354.0 308.5 L354.8 308.3 L356.3 310.7 L357.4 310.1 L358.9 308.9 L360.0 310.8 L361.5 309.0 L362.3 307.7 L363.8 310.8 L364.9 308.8 L366.0 310.3 L366.8 308.0 L367.9 311.1 L369.0 309.8 L370.1 308.7 L370.9 311.0 L372.4 308.7 L373.2 310.7 L374.0 308.5 L375.5 312.8 L376.6 309.0 L378.1 308.9 L379.6 309.4 L380.7 308.5 L381.5 309.8 L382.3 308.5 L383.8 309.4 L384.6 309.4 L386.1 310.0 L387.6 308.6 L388.4 308.9 L389.2 308.2 L390.7 309.1 L391.8 310.1 L393.3 309.4 L394.8 310.0 L395.6 307.3 L396.4 310.6 L397.9 308.9 L399.4 310.0 L400.5 308.3 L401.6 310.7 L403.1 308.3 L404.2 309.4 L405.0 307.4 L406.5 310.8 L407.3 309.4 L408.1 308.4 L408.9 311.0 L410.4 308.7 L411.2 310.0 L412.3 309.0 L413.8 309.8 L415.3 311.0 L416.1 308.2 L417.6 310.0 L418.7 308.7 L419.5 308.5 L421.0 309.4 L421.5 305.1 L422.0 296.2 L422.5 289.9 L423.0 285.9 L423.5 284.0 L424.0 283.8 L424.5 283.8 L425.0 285.2 L425.8 283.8 L426.9 282.4 L427.7 284.8 L429.2 282.4 L430.0 284.9 L431.1 284.4 L432.2 281.9 L433.3 284.4 L434.8 283.5 L435.9 285.1 L436.7 283.2 L438.2 284.9 L439.0 285.2 L440.5 281.5 L441.3 285.4 L442.4 283.8 L443.5 285.0 L444.3 282.9 L445.8 284.2 L446.6 283.1 L447.4 285.0 L448.9 283.8 L449.7 283.8 L451.2 284.3 L452.3 285.9 L453.8 283.0 L454.6 284.6 L455.4 281.9 L456.2 283.2 L457.7 282.5 L458.8 284.8 L459.6 283.5 L461.1 284.5 L462.6 282.1 L463.4 284.9 L464.2 284.1 L465.0 282.8 L466.1 284.5 L466.9 283.2 L468.4 285.4 L469.5 282.9 L471.0 284.3 L471.8 283.4 L473.3 284.6 L474.8 284.3 L475.6 283.4 L476.7 284.2 L477.5 283.0 L478.6 282.0 L479.7 282.7 L481.2 284.8 L482.3 283.2 L483.8 284.4 L485.3 283.2 L486.4 284.1 L487.9 285.8 L488.7 283.1 L489.5 284.4 L491.0 283.8 L491.8 284.2 L492.6 282.3 L493.4 284.4 L494.2 281.0 L495.0 285.1 L496.1 283.8 L496.9 284.3 L497.7 283.8 L499.2 284.3 L500.0 283.8 L501.5 284.8 L502.6 284.4 L504.1 283.3 L504.9 283.8 L506.4 282.5 L507.5 282.2 L508.6 284.2 L510.1 283.8 L510.9 285.5 L512.4 281.3 L513.5 285.2 L514.6 282.8 L516.1 284.3 L517.2 284.7 L518.0 283.2 L519.1 285.1 L520.2 282.9 L521.3 284.2 L522.1 282.7 L523.6 283.8 L525.1 284.7 L526.2 283.1 L527.0 282.5 L528.5 285.4 L529.3 283.5 L530.1 283.3 L531.2 282.7 L532.7 284.4 L533.5 283.3 L535.0 284.4 L536.5 284.9 L538.0 283.5 L539.1 284.5 L539.9 283.3 L541.0 284.1 L541.8 283.3 L542.9 285.3 L543.7 283.8 L545.2 284.9 L546.3 283.3 L547.4 284.2 L548.2 282.6 L549.3 284.3 L550.4 284.6 L551.2 283.5 L552.7 284.2 L554.2 282.1 L555.7 282.4 L556.8 283.8 L557.6 283.8 L558.7 285.3 L560.2 283.8 L561.3 284.5 L562.4 283.8 L563.5 283.2 L564.6 284.9 L566.1 283.5 L566.9 284.6 L568.0 284.3 L569.5 284.1 L570.6 284.2 L571.7 283.8 L573.2 284.3 L574.3 280.6 L575.8 282.5 L576.6 284.2 L577.7 282.8 L578.8 283.8 L579.6 283.8 L581.1 283.8 L581.9 286.4 L583.0 283.2 L583.8 282.7 L584.9 285.1 L585.7 283.2 L586.5 284.4 L587.3 282.5 L588.1 283.2 L589.6 283.1 L590.4 284.8 L591.5 283.3 L592.3 285.4 L593.8 285.9 L595.3 285.7 L596.1 281.2 L597.6 282.3 L598.7 284.7 L599.5 282.7 L601.0 284.9 L601.8 284.7 L602.6 283.4 L604.1 283.5 L605.2 283.8 L606.7 283.5 L608.2 284.9 L609.0 282.7 L610.5 284.5 L612.0 283.2 L613.5 283.1 L614.3 283.4 L615.8 285.1 L616.9 283.1 L617.7 282.5 L618.8 283.8 L619.6 283.5 L620.7 282.0 L621.8 284.2 L623.3 282.7 L624.4 285.6 L625.5 281.2 L626.3 284.6 L627.8 282.0 L628.6 283.3 L629.4 285.0 L630.5 281.5 L631.6 285.0 L633.1 284.2 L633.9 284.8 L634.7 281.4 L635.8 284.8 L636.6 282.9 L638.1 282.4 L638.9 284.3 L640.4 283.8 L641.2 284.5 L642.0 284.7 L643.1 283.8 L643.9 283.8 L644.7 283.1 L646.2 284.9 L647.0 282.9 L648.5 283.1 L650.0 284.6 L650.8 282.9 L651.6 284.4 L652.4 282.5 L653.9 284.4 L655.0 283.4 L656.1 284.3 L657.2 283.3 L658.7 283.3 L659.8 284.3 L660.9 283.5 L662.4 284.2 L663.9 283.4 L664.7 283.4 L666.2 283.0 L667.0 285.4 L668.1 283.8 L669.6 282.8 L670.7 284.4 L672.2 283.8 L673.0 282.0 L674.1 284.2 L674.9 282.6 L675.7 284.9 L676.5 283.1 L677.6 283.8 L679.1 284.4 L679.9 281.9 L681.4 284.9 L682.5 282.7 L684.0 284.7 L685.1 284.4 L686.2 284.6 L687.3 283.1 L688.4 283.3 L689.9 284.7 L691.4 282.9" stroke="#20e020" stroke-width="1.2" fill="none"/><path d="M11.0 172.75H695.0M353.25 2.0V343.5" stroke="#8c8672" stroke-width="1.2" fill="none"/><path d="M185.9 2H192.7L189.3 8.6Z" fill="#f08878"/><path d="M681.4 91.3L687.2 88.5V94.1Z" fill="#e6e600"/><path d="M686 91.3H695" stroke="#e6e600" stroke-width="1.5"/><path d="M13 103.50H16.5V101.10L23.4 104.80L16.5 108.50V106.10H13Z" fill="#ffff10"/><circle cx="8.1" cy="104.8" r="6.5" fill="#ffff10" stroke="#f4b050" stroke-width="1.3"/><text x="8.1" y="107.60" font-family="Liberation Sans" font-size="8" font-weight="bold" text-anchor="middle" fill="#1a1a1a">1</text><path d="M13 171.20H16.5V168.80L23.4 172.50L16.5 176.20V173.80H13Z" fill="#10f4f4"/><circle cx="8.1" cy="172.5" r="6.5" fill="#10f4f4" stroke="#3a2424" stroke-width="1.3"/><text x="8.1" y="175.30" font-family="Liberation Sans" font-size="8" font-weight="bold" text-anchor="middle" fill="#1a1a1a">2</text><path d="M13 272.10H16.5V269.70L23.4 273.40L16.5 277.10V274.70H13Z" fill="#ff10ff"/><circle cx="8.1" cy="273.4" r="6.5" fill="#ff10ff" stroke="#3a2424" stroke-width="1.3"/><text x="8.1" y="276.20" font-family="Liberation Sans" font-size="8" font-weight="bold" text-anchor="middle" fill="#1a1a1a">3</text><path d="M13 307.80H16.5V305.40L23.4 309.10L16.5 312.80V310.40H13Z" fill="#10f010"/><circle cx="8.1" cy="309.1" r="6.5" fill="#10f010" stroke="#3a2424" stroke-width="1.3"/><text x="8.1" y="311.90" font-family="Liberation Sans" font-size="8" font-weight="bold" text-anchor="middle" fill="#1a1a1a">4</text><text transform="translate(35.0 97.4) scale(0.7450 1)" font-family="Liberation Sans" font-size="9.3" font-weight="normal" fill="#e0e000" stroke="#e0e000" stroke-width="0.3">LDO4</text><text transform="translate(33.0 165.1) scale(0.7738 1)" font-family="Liberation Sans" font-size="9.3" font-weight="normal" fill="#10c0c8" stroke="#10c0c8" stroke-width="0.3">LDO6</text><text transform="translate(33.4 264.3) scale(0.7941 1)" font-family="Liberation Sans" font-size="9.3" font-weight="normal" fill="#e000e0" stroke="#e000e0" stroke-width="0.3">VDD2</text><text transform="translate(34.5 303.7) scale(0.7656 1)" font-family="Liberation Sans" font-size="9.3" font-weight="normal" fill="#10d010" stroke="#10d010" stroke-width="0.3">LDO2</text><rect x="14.6" y="349.9" width="191.5" height="62.0" rx="3.5" fill="none" stroke="#8c8c8c" stroke-width="1.3"/><rect x="20.6" y="354.6" width="22" height="9" rx="4.5" fill="#dede00" stroke="#c8c8d8" stroke-width="0.9"/><rect x="22.1" y="362.00" width="19" height="0.9" rx="0.4" fill="#000" opacity="0.18"/><text x="27.10" y="361.50" font-family="Liberation Sans" font-size="6.6" font-weight="bold" fill="#101010" textLength="7.6" lengthAdjust="spacingAndGlyphs">C1</text><text transform="translate(46.0 361.2) scale(0.9058 1)" font-family="Liberation Sans" font-size="9.2" font-weight="bold" fill="#fff">3.0V/div</text><text transform="translate(125.1 361.1) scale(0.8533 1)" font-family="Liberation Sans" font-size="9.2" font-weight="bold" fill="#fff">1MΩ</text><text x="146.9" y="358.7" font-family="Liberation Sans" font-size="5.4" font-weight="bold" fill="#fff">B</text><text transform="translate(148.6 363.2) scale(1.1629 1)" font-family="Liberation Sans" font-size="8.2" font-weight="bold" fill="#fff">W</text><text transform="translate(158.0 361.1) scale(0.8513 1)" font-family="Liberation Sans" font-size="9.2" font-weight="bold" fill="#fff">:500M</text><rect x="20.6" y="368.85" width="22" height="9" rx="4.5" fill="#10d4e0" stroke="#c8c8d8" stroke-width="0.9"/><rect x="22.1" y="376.25" width="19" height="0.9" rx="0.4" fill="#000" opacity="0.18"/><text x="27.10" y="375.75" font-family="Liberation Sans" font-size="6.6" font-weight="bold" fill="#101010" textLength="7.6" lengthAdjust="spacingAndGlyphs">C2</text><text transform="translate(46.0 375.45) scale(0.9058 1)" font-family="Liberation Sans" font-size="9.2" font-weight="bold" fill="#fff">3.0V/div</text><text transform="translate(125.1 375.35) scale(0.8533 1)" font-family="Liberation Sans" font-size="9.2" font-weight="bold" fill="#fff">1MΩ</text><text x="146.9" y="372.9" font-family="Liberation Sans" font-size="5.4" font-weight="bold" fill="#fff">B</text><text transform="translate(148.6 377.45) scale(1.1629 1)" font-family="Liberation Sans" font-size="8.2" font-weight="bold" fill="#fff">W</text><text transform="translate(158.0 375.35) scale(0.8513 1)" font-family="Liberation Sans" font-size="9.2" font-weight="bold" fill="#fff">:500M</text><rect x="20.6" y="383.1" width="22" height="9" rx="4.5" fill="#d810e0" stroke="#c8c8d8" stroke-width="0.9"/><rect x="22.1" y="390.50" width="19" height="0.9" rx="0.4" fill="#000" opacity="0.18"/><text x="27.10" y="390.00" font-family="Liberation Sans" font-size="6.6" font-weight="bold" fill="#101010" textLength="7.6" lengthAdjust="spacingAndGlyphs">C3</text><text transform="translate(46.0 389.7) scale(0.9058 1)" font-family="Liberation Sans" font-size="9.2" font-weight="bold" fill="#fff">3.0V/div</text><text transform="translate(125.1 389.6) scale(0.8533 1)" font-family="Liberation Sans" font-size="9.2" font-weight="bold" fill="#fff">1MΩ</text><text x="146.9" y="387.2" font-family="Liberation Sans" font-size="5.4" font-weight="bold" fill="#fff">B</text><text transform="translate(148.6 391.7) scale(1.1629 1)" font-family="Liberation Sans" font-size="8.2" font-weight="bold" fill="#fff">W</text><text transform="translate(158.0 389.6) scale(0.8513 1)" font-family="Liberation Sans" font-size="9.2" font-weight="bold" fill="#fff">:500M</text><rect x="20.6" y="397.35" width="22" height="9" rx="4.5" fill="#10d810" stroke="#c8c8d8" stroke-width="0.9"/><rect x="22.1" y="404.75" width="19" height="0.9" rx="0.4" fill="#000" opacity="0.18"/><text x="27.10" y="404.25" font-family="Liberation Sans" font-size="6.6" font-weight="bold" fill="#101010" textLength="7.6" lengthAdjust="spacingAndGlyphs">C4</text><text transform="translate(46.0 403.95) scale(0.9058 1)" font-family="Liberation Sans" font-size="9.2" font-weight="bold" fill="#fff">2.0V/div</text><text transform="translate(125.1 403.85) scale(0.8533 1)" font-family="Liberation Sans" font-size="9.2" font-weight="bold" fill="#fff">1MΩ</text><text x="146.9" y="401.4" font-family="Liberation Sans" font-size="5.4" font-weight="bold" fill="#fff">B</text><text transform="translate(148.6 405.95) scale(1.1629 1)" font-family="Liberation Sans" font-size="8.2" font-weight="bold" fill="#fff">W</text><text transform="translate(158.0 403.85) scale(0.8513 1)" font-family="Liberation Sans" font-size="9.2" font-weight="bold" fill="#fff">:500M</text><rect x="404.9" y="349.9" width="125.9" height="15.1" rx="3.5" fill="none" stroke="#8c8c8c" stroke-width="1.3"/><rect x="408.7" y="354.4" width="9.8" height="9.4" fill="#d8dde4" stroke="#f09020" stroke-width="1"/><text x="409.6" y="362.2" font-family="Liberation Sans" font-size="8" font-weight="bold" fill="#202020">A'</text><rect x="420.8" y="354.8" width="22" height="9" rx="4.5" fill="#e6e600" stroke="#c8c8d8" stroke-width="0.9"/><rect x="422.3" y="362.20" width="19" height="0.9" rx="0.4" fill="#000" opacity="0.18"/><text x="427.30" y="361.70" font-family="Liberation Sans" font-size="6.6" font-weight="bold" fill="#101010" textLength="7.6" lengthAdjust="spacingAndGlyphs">C1</text><path d="M445.2 362.6H447.6C449.6 362.6 449.8 360 450.4 358.4C451 356.6 451.4 355.2 453 355.2H454.4" stroke="#fff" stroke-width="1.3" fill="none"/><text transform="translate(457.0 360.4) scale(0.8507 1)" font-family="Liberation Sans" font-size="9.2" font-weight="bold" fill="#fff">1.2V</text><rect x="534.9" y="350.1" width="156.2" height="61.8" rx="3.5" fill="none" stroke="#8c8c8c" stroke-width="1.3"/><text transform="translate(539.5 361.0) scale(0.9253 1)" font-family="Liberation Sans" font-size="9.2" font-weight="bold" fill="#fff">2.0ms/div</text><text transform="translate(584.3 361.0) scale(0.9014 1)" font-family="Liberation Sans" font-size="9.2" font-weight="bold" fill="#fff">50.0kS/s</text><text transform="translate(642.0 361.0) scale(0.9099 1)" font-family="Liberation Sans" font-size="9.2" font-weight="bold" fill="#fff">20.0µs/pt</text><text transform="translate(539.5 375.3) scale(0.8947 1)" font-family="Liberation Sans" font-size="9.2" font-weight="bold" fill="#20e020">Run</text><text transform="translate(589.5 375.3) scale(0.9014 1)" font-family="Liberation Sans" font-size="9.2" font-weight="bold" fill="#fff">Sample</text><rect x="678.9" y="368.2" width="2.5" height="9.5" rx="1.1" fill="#f0f000"/><circle cx="680.15" cy="377.6" r="2.5" fill="#f0f000"/><text transform="translate(539.5 389.6) scale(0.8903 1)" font-family="Liberation Sans" font-size="9.2" font-weight="bold" fill="#fff">3 acqs</text><text transform="translate(635.5 389.6) scale(0.8967 1)" font-family="Liberation Sans" font-size="9.2" font-weight="bold" fill="#fff">RL:1.0k</text><text transform="translate(539.5 404.0) scale(0.8975 1)" font-family="Liberation Sans" font-size="9.2" font-weight="bold" fill="#fff">Auto</text><text transform="translate(568.0 404.0) scale(0.9191 1)" font-family="Liberation Sans" font-size="9.2" font-weight="bold" fill="#fff">June 01, 2015</text><text transform="translate(654.4 404.0) scale(0.8961 1)" font-family="Liberation Sans" font-size="9.2" font-weight="bold" fill="#f09000">16:35:43</text><rect x="15.6" y="420.0" width="385.2" height="71.2" rx="3.5" fill="none" stroke="#8c8c8c" stroke-width="1.3"/><rect x="135.3" y="437.2" width="54.0" height="52.0" fill="#222"/><rect x="237.6" y="437.2" width="47.8" height="52.0" fill="#222"/><path d="M87.2 437.2H398.6M87.2 450.2H398.6M87.2 463.3H398.6M87.2 476.3H398.6M87.2 489.2H398.6M87.2 437.2V489.2M135.3 437.2V489.2M189.3 437.2V489.2M237.6 437.2V489.2M285.4 437.2V489.2M333.6 437.2V489.2M374.4 437.2V489.2M398.6 437.2V489.2" stroke="#9a9a9a" stroke-width="1.1" fill="none"/><text transform="translate(100.18 432.60) scale(0.92 1)" font-family="Liberation Sans" font-size="9.0" font-weight="bold" fill="#fff">Value</text><text transform="translate(151.42 432.60) scale(0.92 1)" font-family="Liberation Sans" font-size="9.0" font-weight="bold" fill="#fff">Mean</text><text transform="translate(206.07 432.60) scale(0.92 1)" font-family="Liberation Sans" font-size="9.0" font-weight="bold" fill="#fff">Min</text><text transform="translate(252.95 432.60) scale(0.92 1)" font-family="Liberation Sans" font-size="9.0" font-weight="bold" fill="#fff">Max</text><text transform="translate(296.31 432.60) scale(0.92 1)" font-family="Liberation Sans" font-size="9.0" font-weight="bold" fill="#fff">St Dev</text><text transform="translate(341.34 432.60) scale(0.92 1)" font-family="Liberation Sans" font-size="9.0" font-weight="bold" fill="#fff">Count</text><text transform="translate(378.71 432.60) scale(0.92 1)" font-family="Liberation Sans" font-size="9.0" font-weight="bold" fill="#fff">Info</text><rect x="20.6" y="438.09999999999997" width="22" height="9" rx="4.5" fill="#dede00" stroke="#c8c8d8" stroke-width="0.9"/><rect x="22.1" y="445.50" width="19" height="0.9" rx="0.4" fill="#000" opacity="0.18"/><text x="27.10" y="445.00" font-family="Liberation Sans" font-size="6.6" font-weight="bold" fill="#101010" textLength="7.6" lengthAdjust="spacingAndGlyphs">C1</text><text transform="translate(47.40 445.80) scale(0.92 1)" font-family="Liberation Sans" font-size="9.0" font-weight="bold" fill="#fff">Ampl</text><text transform="translate(88.50 445.80) scale(0.92 1)" font-family="Liberation Sans" font-size="9.0" font-weight="bold" fill="#fff">2.76V</text><text transform="translate(136.60 445.80) scale(0.92 1)" font-family="Liberation Sans" font-size="9.0" font-weight="bold" fill="#fff">2.84</text><text transform="translate(190.60 445.80) scale(0.92 1)" font-family="Liberation Sans" font-size="9.0" font-weight="bold" fill="#fff">2.76</text><text transform="translate(238.90 445.80) scale(0.92 1)" font-family="Liberation Sans" font-size="9.0" font-weight="bold" fill="#fff">3.0</text><text transform="translate(286.70 445.80) scale(0.92 1)" font-family="Liberation Sans" font-size="9.0" font-weight="bold" fill="#fff">138.6m</text><text transform="translate(334.90 445.80) scale(0.92 1)" font-family="Liberation Sans" font-size="9.0" font-weight="bold" fill="#fff">3.0</text><rect x="20.6" y="451.09999999999997" width="22" height="9" rx="4.5" fill="#10d4e0" stroke="#c8c8d8" stroke-width="0.9"/><rect x="22.1" y="458.50" width="19" height="0.9" rx="0.4" fill="#000" opacity="0.18"/><text x="27.10" y="458.00" font-family="Liberation Sans" font-size="6.6" font-weight="bold" fill="#101010" textLength="7.6" lengthAdjust="spacingAndGlyphs">C2</text><text transform="translate(47.40 458.80) scale(0.92 1)" font-family="Liberation Sans" font-size="9.0" font-weight="bold" fill="#fff">Ampl</text><text transform="translate(88.50 458.80) scale(0.92 1)" font-family="Liberation Sans" font-size="9.0" font-weight="bold" fill="#fff">2.76V</text><text transform="translate(136.60 458.80) scale(0.92 1)" font-family="Liberation Sans" font-size="9.0" font-weight="bold" fill="#fff">2.76</text><text transform="translate(190.60 458.80) scale(0.92 1)" font-family="Liberation Sans" font-size="9.0" font-weight="bold" fill="#fff">2.76</text><text transform="translate(238.90 458.80) scale(0.92 1)" font-family="Liberation Sans" font-size="9.0" font-weight="bold" fill="#fff">2.76</text><text transform="translate(286.70 458.80) scale(0.92 1)" font-family="Liberation Sans" font-size="9.0" font-weight="bold" fill="#fff">0.0</text><text transform="translate(334.90 458.80) scale(0.92 1)" font-family="Liberation Sans" font-size="9.0" font-weight="bold" fill="#fff">3.0</text><rect x="20.6" y="464.2" width="22" height="9" rx="4.5" fill="#d810e0" stroke="#c8c8d8" stroke-width="0.9"/><rect x="22.1" y="471.60" width="19" height="0.9" rx="0.4" fill="#000" opacity="0.18"/><text x="27.10" y="471.10" font-family="Liberation Sans" font-size="6.6" font-weight="bold" fill="#101010" textLength="7.6" lengthAdjust="spacingAndGlyphs">C3</text><text transform="translate(47.40 471.90) scale(0.92 1)" font-family="Liberation Sans" font-size="9.0" font-weight="bold" fill="#fff">Ampl</text><text transform="translate(88.50 471.90) scale(0.92 1)" font-family="Liberation Sans" font-size="9.0" font-weight="bold" fill="#fff">3.24V</text><text transform="translate(136.60 471.90) scale(0.92 1)" font-family="Liberation Sans" font-size="9.0" font-weight="bold" fill="#fff">3.24</text><text transform="translate(190.60 471.90) scale(0.92 1)" font-family="Liberation Sans" font-size="9.0" font-weight="bold" fill="#fff">3.24</text><text transform="translate(238.90 471.90) scale(0.92 1)" font-family="Liberation Sans" font-size="9.0" font-weight="bold" fill="#fff">3.24</text><text transform="translate(286.70 471.90) scale(0.92 1)" font-family="Liberation Sans" font-size="9.0" font-weight="bold" fill="#fff">384.6a</text><text transform="translate(334.90 471.90) scale(0.92 1)" font-family="Liberation Sans" font-size="9.0" font-weight="bold" fill="#fff">3.0</text><rect x="20.6" y="477.2" width="22" height="9" rx="4.5" fill="#10d810" stroke="#c8c8d8" stroke-width="0.9"/><rect x="22.1" y="484.60" width="19" height="0.9" rx="0.4" fill="#000" opacity="0.18"/><text x="27.10" y="484.10" font-family="Liberation Sans" font-size="6.6" font-weight="bold" fill="#101010" textLength="7.6" lengthAdjust="spacingAndGlyphs">C4</text><text transform="translate(47.40 484.90) scale(0.92 1)" font-family="Liberation Sans" font-size="9.0" font-weight="bold" fill="#fff">Ampl*</text><text transform="translate(88.50 484.90) scale(0.92 1)" font-family="Liberation Sans" font-size="9.0" font-weight="bold" fill="#fff">1.52V</text><text transform="translate(136.60 484.90) scale(0.92 1)" font-family="Liberation Sans" font-size="9.0" font-weight="bold" fill="#fff">1.52</text><text transform="translate(190.60 484.90) scale(0.92 1)" font-family="Liberation Sans" font-size="9.0" font-weight="bold" fill="#fff">1.52</text><text transform="translate(238.90 484.90) scale(0.92 1)" font-family="Liberation Sans" font-size="9.0" font-weight="bold" fill="#fff">1.52</text><text transform="translate(286.70 484.90) scale(0.92 1)" font-family="Liberation Sans" font-size="9.0" font-weight="bold" fill="#fff">0.0</text><text transform="translate(334.90 484.90) scale(0.92 1)" font-family="Liberation Sans" font-size="9.0" font-weight="bold" fill="#fff">3.0</text></svg></body></html>
